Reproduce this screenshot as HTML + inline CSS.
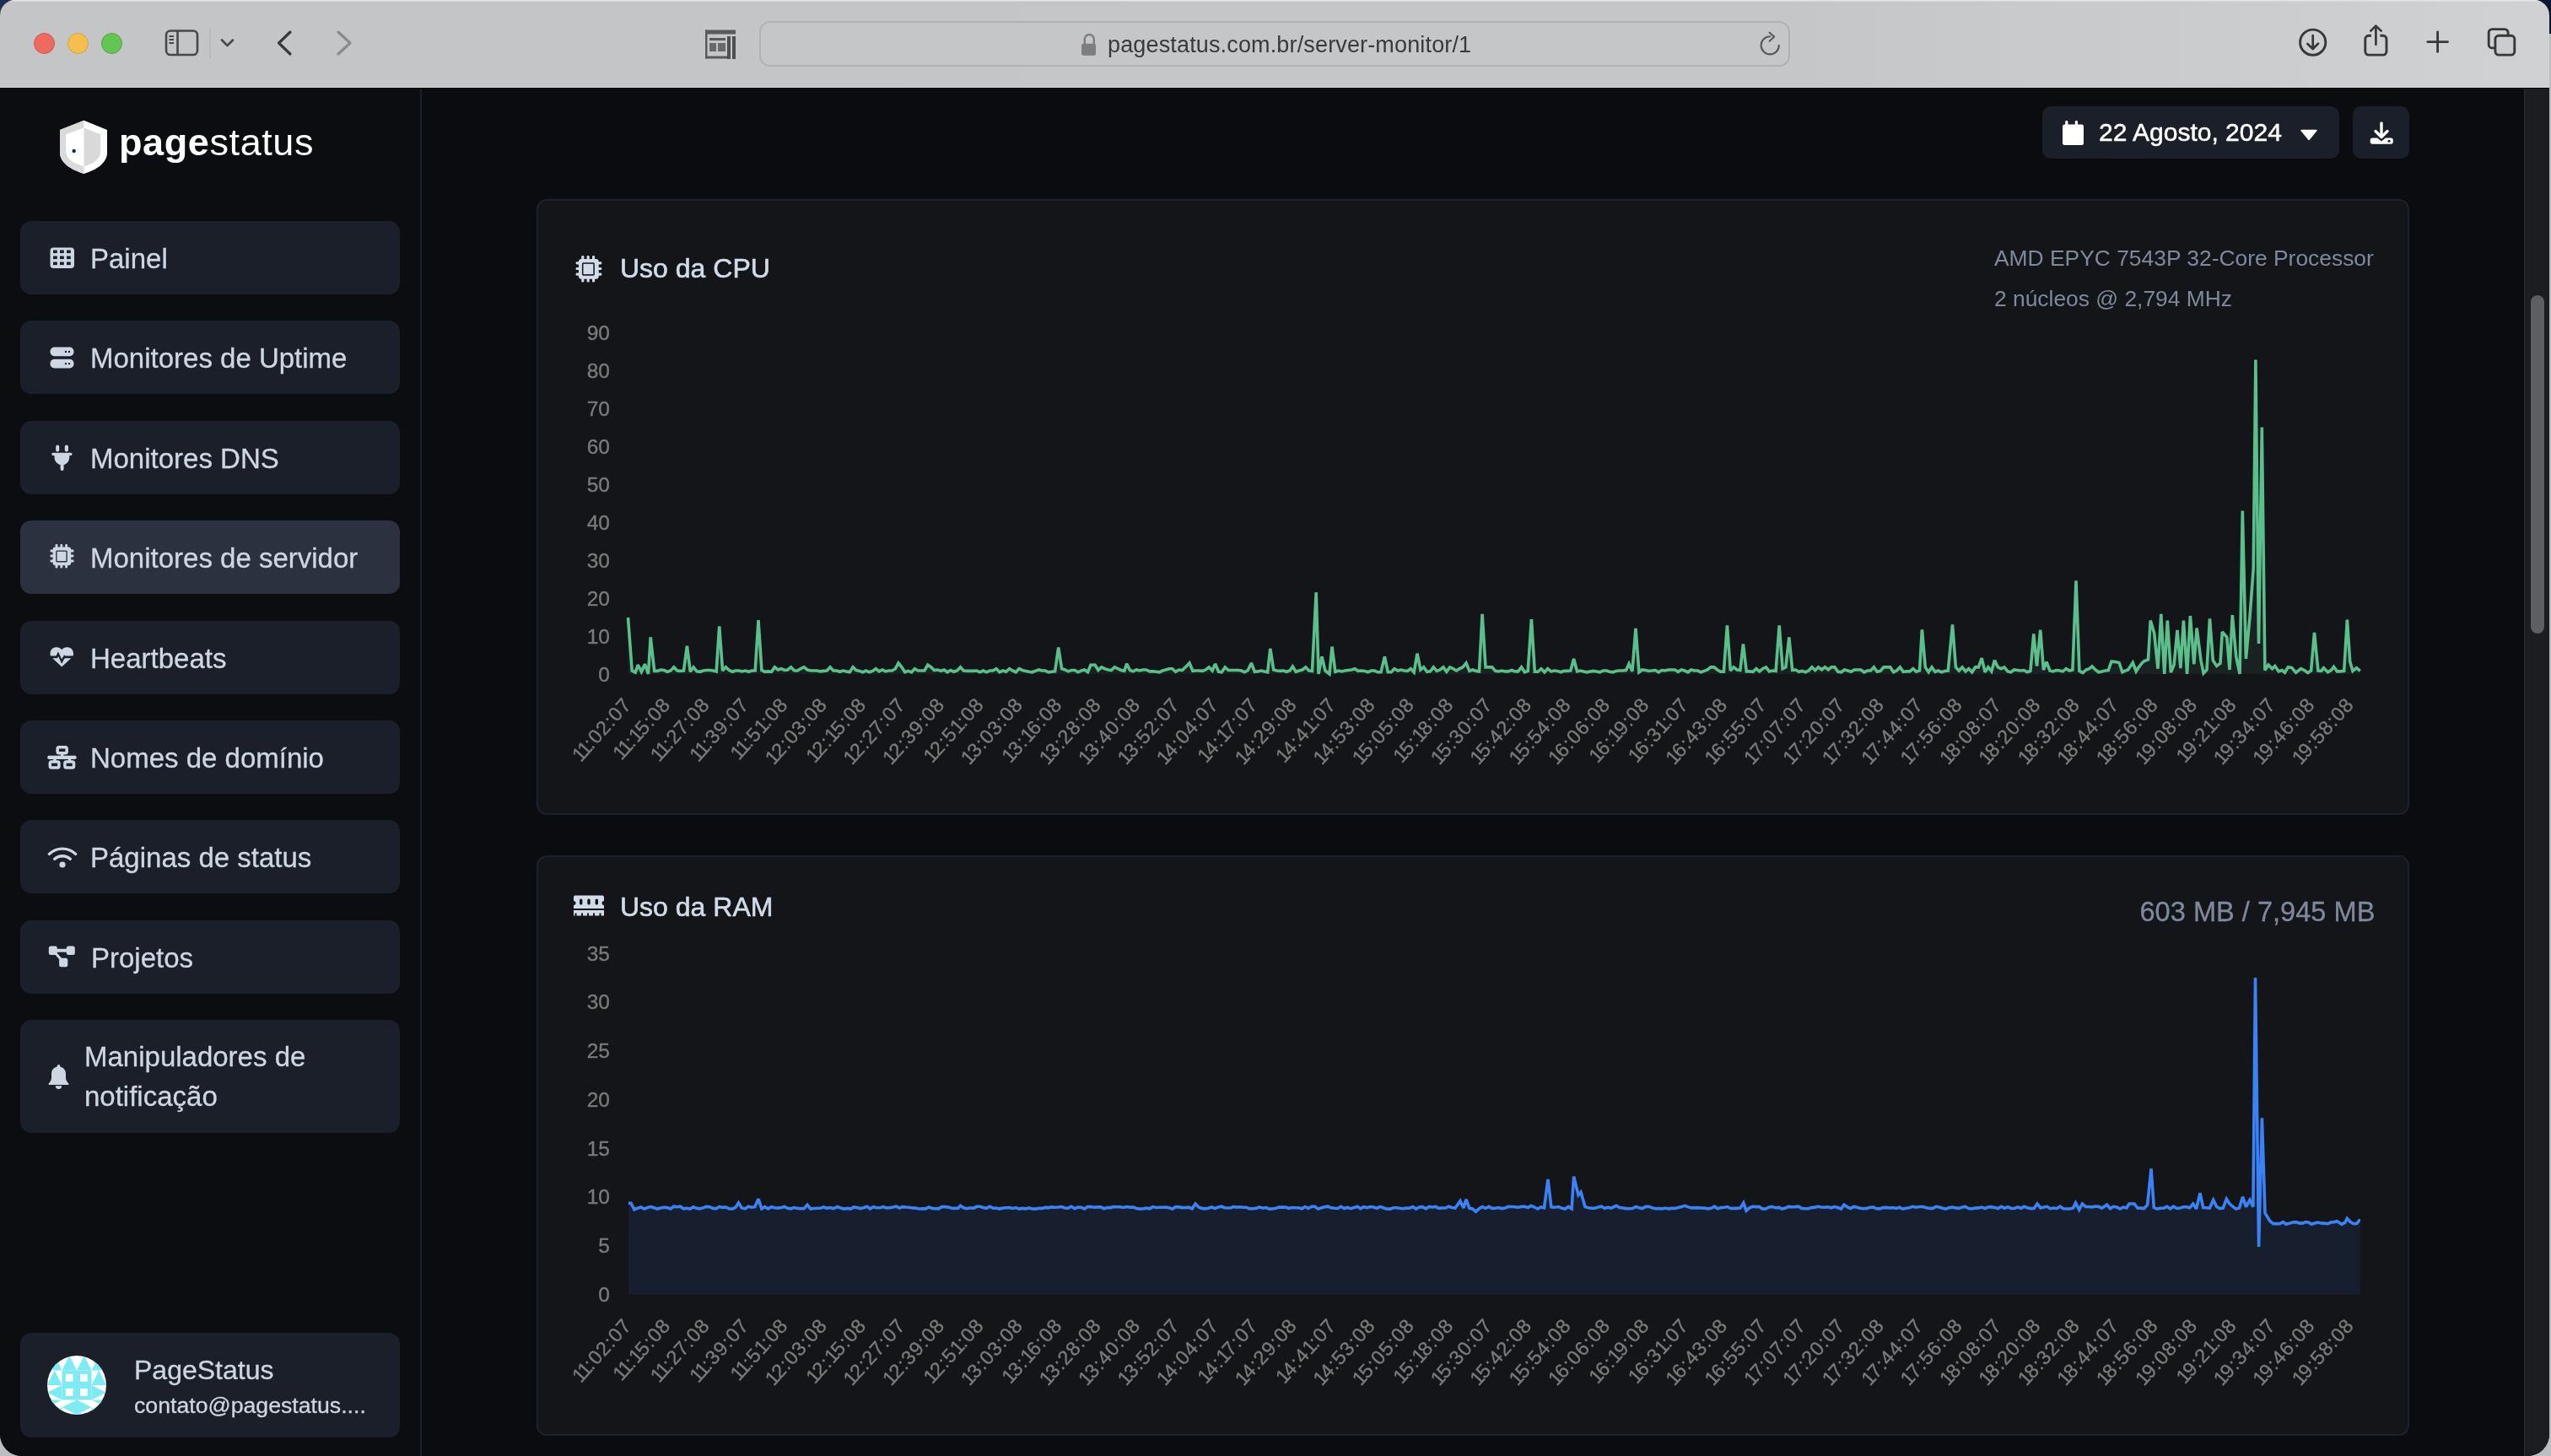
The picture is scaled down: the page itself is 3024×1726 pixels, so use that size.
<!DOCTYPE html>
<html><head><meta charset="utf-8">
<style>
*{box-sizing:border-box;margin:0;padding:0}
html,body{width:3024px;height:1726px;overflow:hidden;-webkit-font-smoothing:antialiased;background:#bdbec1;font-family:"Liberation Sans",sans-serif}
.abs{position:absolute}
#corner-tl{left:0;top:0;width:40px;height:40px;background:#1d3054}
#corner-tr{right:0;top:0;width:40px;height:40px;background:#0a1533}
#win{will-change:transform;position:absolute;left:0;top:0;width:3022px;height:1726px;border-radius:18px 18px 26px 26px;overflow:hidden;background:#0b0c10}
#chrome{left:0;top:0;width:3022px;height:103px;background:linear-gradient(to right,#c4c5c7 0%,#c5c6c8 70%,#d0d1d3 100%);box-shadow:inset 0 1.5px 0 #e6e6e7}
#chrome:after{content:'';position:absolute;left:0;top:103px;width:100%;height:1px;background:#d4d4d6;border-bottom:1px solid #000}
.tl{position:absolute;top:39px;width:25px;height:25px;border-radius:50%}
#urlbar{left:900px;top:24.5px;width:1222px;height:54px;border-radius:13px;border:2px solid #b0b1b3;background:#c5c6c8}
#urltext{left:1313px;top:38px;font-size:27px;color:#3a3a3c;white-space:nowrap;letter-spacing:0.15px}
#sidebar{left:0;top:105px;width:500px;height:1622px;background:#0b0d11;border-right:2px solid #1b212e}
.nav{position:absolute;left:24px;width:450px;height:86.5px;border-radius:13px;background:#1b1f2a}
.nav.active{background:#2c3140}
.nav .lbl{position:absolute;left:83px;top:2px;line-height:86px;font-size:33px;color:#cdd6e3;white-space:nowrap;-webkit-text-stroke:0.3px #cdd6e3}
.nav svg{position:absolute}
#main{left:500px;top:105px;width:2492px;height:1622px;background:#0b0c10}
.card{position:absolute;left:636px;width:2220px;border:2px solid #1b212d;border-radius:12px;background:#141518}
.ttl{position:absolute;left:735px;font-size:32px;color:#d2dce9;white-space:nowrap;-webkit-text-stroke:0.6px #d2dce9}
.gray{position:absolute;color:#7f899c;white-space:nowrap}
svg text.yl{font-family:"Liberation Sans";font-size:24.5px;fill:#7a7a7a;stroke:#7a7a7a;stroke-width:0.35px;text-anchor:end;dominant-baseline:central}
svg text.xl{font-family:"Liberation Sans";font-size:23.5px;letter-spacing:1px;fill:#7a7a7a;stroke:#7a7a7a;stroke-width:0.35px;text-anchor:end;dominant-baseline:central}
#scroll{left:2992px;top:105px;width:30px;height:1622px;background:#1c1d20;border-left:1.5px solid #2c2d31}
#thumb{left:3000px;top:350px;width:16px;height:401px;border-radius:8px;background:#5e5f62}
</style></head><body>
<div id="corner-tl" class="abs"></div><div id="corner-tr" class="abs"></div>
<div id="win">
<div id="chrome" class="abs">
  <div class="tl" style="left:40px;background:#ee6a5f;border:1px solid #d5544a"></div>
  <div class="tl" style="left:80px;background:#f5bf4f;border:1px solid #d9a33a"></div>
  <div class="tl" style="left:120px;background:#62c554;border:1px solid #4ea941"></div>
  <svg class="abs" style="left:0;top:0" width="1000" height="104">
    <!-- sidebar toggle -->
    <rect x="197" y="36.5" width="37" height="28.5" rx="5" fill="none" stroke="#48484a" stroke-width="2.6"/>
    <line x1="210.5" y1="37" x2="210.5" y2="65" stroke="#48484a" stroke-width="2.6"/>
    <line x1="200.5" y1="43" x2="206" y2="43" stroke="#48484a" stroke-width="1.8"/>
    <line x1="200.5" y1="47" x2="206" y2="47" stroke="#48484a" stroke-width="1.8"/>
    <line x1="200.5" y1="51" x2="206" y2="51" stroke="#48484a" stroke-width="1.8"/>
    <line x1="249" y1="34" x2="249" y2="70" stroke="#adaeb0" stroke-width="1"/>
    <polyline points="263,47.5 269.5,54 276,47.5" fill="none" stroke="#4a4a4c" stroke-width="2.6" stroke-linecap="round" stroke-linejoin="round"/>
    <polyline points="344,38 330.5,51 344,64" fill="none" stroke="#3a3a3c" stroke-width="3.2" stroke-linecap="round" stroke-linejoin="round"/>
    <polyline points="401,38 415,51 401,64" fill="none" stroke="#8a8b8d" stroke-width="3.2" stroke-linecap="round" stroke-linejoin="round"/>
    <!-- reader -->
    <rect x="836" y="35.5" width="36" height="5" fill="#5a5a5c"/>
    <rect x="836" y="35.5" width="2.5" height="34" fill="#5a5a5c"/>
    <rect x="836" y="66.5" width="28" height="3" fill="#5a5a5c"/>
    <rect x="841" y="45" width="19" height="3" fill="#5a5a5c"/>
    <rect x="841" y="51" width="8" height="10" fill="#6a6a6c"/>
    <rect x="851" y="51" width="9" height="10" fill="#6a6a6c"/>
    <rect x="862" y="43" width="4" height="27" fill="#4f4f51"/>
    <rect x="868" y="43" width="4" height="27" fill="#4f4f51"/>
  </svg>
  <div id="urlbar" class="abs"></div>
  <svg class="abs" style="left:1270px;top:30px" width="50" height="44">
    <path d="M15.8,22 v-5.5 a5.5,5.5 0 0 1 11,0 v5.5" fill="none" stroke="#7e7e80" stroke-width="2.4"/>
    <rect x="12" y="21.8" width="17" height="13.9" rx="2.5" fill="#7e7e80"/>
  </svg>
  <div id="urltext" class="abs">pagestatus.com.br/server-monitor/1</div>
  <svg class="abs" style="left:2080px;top:30.5px" width="40" height="40">
    <path d="M28.8,22.8 A10.6,10.6 0 1 1 18.2,12.2" fill="none" stroke="#58585a" stroke-width="2.1" stroke-linecap="round"/>
    <polyline points="17.6,7.6 23.2,12.5 17.6,17.8" fill="none" stroke="#58585a" stroke-width="2.1" stroke-linecap="round" stroke-linejoin="round"/>
  </svg>
  <svg class="abs" style="left:2700px;top:19px" width="322" height="64">
    <circle cx="41.7" cy="31.2" r="15.1" fill="none" stroke="#38383a" stroke-width="2.9"/>
    <line x1="41.7" y1="23" x2="41.7" y2="38.5" stroke="#38383a" stroke-width="2.7" stroke-linecap="round"/>
    <polyline points="35.4,33 41.7,39 48,32.6" fill="none" stroke="#38383a" stroke-width="2.7" stroke-linecap="round" stroke-linejoin="round"/>
    <path d="M111,23.3 h-3.2 a4,4 0 0 0 -4,4 v14.8 a4,4 0 0 0 4,4 h17.2 a4,4 0 0 0 4,-4 v-14.8 a4,4 0 0 0 -4,-4 h-3.6" fill="none" stroke="#38383a" stroke-width="2.9" stroke-linecap="butt"/>
    <line x1="116.4" y1="12.5" x2="116.4" y2="33.8" stroke="#38383a" stroke-width="2.7" stroke-linecap="round"/>
    <polyline points="110.3,17.6 116.4,11.6 122.6,17.6" fill="none" stroke="#38383a" stroke-width="2.7" stroke-linecap="round" stroke-linejoin="round"/>
    <line x1="189.6" y1="18.8" x2="189.6" y2="42.3" stroke="#38383a" stroke-width="2.8" stroke-linecap="round"/>
    <line x1="177.8" y1="30.6" x2="201.5" y2="30.6" stroke="#38383a" stroke-width="2.8" stroke-linecap="round"/>
    <rect x="250.2" y="15.6" width="22.9" height="22.3" rx="4" fill="none" stroke="#38383a" stroke-width="2.9"/>
    <rect x="257.9" y="23.3" width="22.9" height="22.8" rx="4" fill="#cbcccf" stroke="#38383a" stroke-width="2.9"/>
  </svg>
</div>

<div id="sidebar" class="abs"></div>
<div id="main" class="abs"></div>

<!-- logo -->
<svg class="abs" style="left:60px;top:135px" width="80" height="80">
  <path d="M39.5,7.8 L67,19 L67,46 C67,58 55,66 39.5,71 C24,66 11,58 11,46 L11,19 Z" fill="#ffffff"/>
  <path d="M39.5,7.8 L11,19 L11,46 C11,58 24,66 39.5,71 Z" fill="#dadada"/>
  <path d="M39.5,16.5 L18.1,24.2 L18.1,44 C18.1,53 27,59 39.5,62.2 C52,59 59.3,53 59.3,44 L59.3,24.2 Z" fill="#ffffff"/>
  <path d="M39.5,16.5 L59.3,24.2 L59.3,44 C59.3,53 52,59 39.5,62.2 Z" fill="#d9d9d9"/>
  <circle cx="27.7" cy="44" r="2.2" fill="#103236"/>
</svg>
<div class="abs" style="left:141px;top:143px;font-size:45px;color:#fff;white-space:nowrap;letter-spacing:0.6px"><b>page</b>status</div>

<!-- nav -->
<div class="nav" style="top:262px">
  <svg style="left:35px;top:31px" width="30" height="26" viewBox="0 0 30 26">
    <rect x="0.5" y="0.5" width="28.5" height="24.5" rx="4" fill="#cdd6e3"/>
    <g fill="#1b1f2a"><rect x="4" y="3.5" width="4.8" height="3.6"/><rect x="12" y="3.5" width="4.8" height="3.6"/><rect x="20" y="3.5" width="4.8" height="3.6"/>
    <rect x="4" y="10.5" width="4.8" height="3.6"/><rect x="12" y="10.5" width="4.8" height="3.6"/><rect x="20" y="10.5" width="4.8" height="3.6"/>
    <rect x="4" y="17.5" width="4.8" height="3.6"/><rect x="12" y="17.5" width="4.8" height="3.6"/><rect x="20" y="17.5" width="4.8" height="3.6"/></g>
  </svg>
  <div class="lbl">Painel</div></div>
<div class="nav" style="top:380px">
  <svg style="left:35px;top:31px" width="30" height="26" viewBox="0 0 30 26">
    <rect x="0.5" y="0.6" width="28" height="10.6" rx="5" fill="#cdd6e3"/>
    <rect x="0.5" y="14.8" width="28" height="10.6" rx="5" fill="#cdd6e3"/>
    <g fill="#1b1f2a"><circle cx="19" cy="5.9" r="1.2"/><circle cx="23" cy="5.9" r="1.2"/><circle cx="19" cy="20.1" r="1.2"/><circle cx="23" cy="20.1" r="1.2"/></g>
  </svg>
  <div class="lbl">Monitores de Uptime</div></div>
<div class="nav" style="top:499px">
  <svg style="left:36px;top:27px" width="26" height="32" viewBox="0 0 26 32">
    <rect x="6.2" y="1.5" width="4" height="8" rx="2" fill="#cdd6e3"/>
    <rect x="16.8" y="1.5" width="4.2" height="8" rx="2" fill="#cdd6e3"/>
    <path d="M2.8,10.7 H24 a1.6,1.6 0 0 1 0,3.2 H22.3 V16 C22.3,21 18.5,24.5 15.6,25 V30 a2,2 0 0 1 -4,0 V25 C8.5,24.5 4.5,21 4.5,16 V13.9 H2.8 a1.6,1.6 0 0 1 0,-3.2 Z" fill="#cdd6e3"/>
  </svg>
  <div class="lbl">Monitores DNS</div></div>
<div class="nav active" style="top:617px">
  <svg style="left:35px;top:27px" width="30" height="30" viewBox="0 0 30 30">
    <rect x="3.6" y="4.5" width="21.6" height="21.7" rx="3" fill="#cdd6e3"/>
    <g fill="#cdd6e3"><rect x="6.6" y="0.9" width="2.8" height="5" rx="1.2"/><rect x="12.4" y="0.9" width="2.8" height="5" rx="1.2"/><rect x="18.2" y="0.9" width="2.8" height="5" rx="1.2"/>
    <rect x="6.6" y="24.5" width="2.8" height="5" rx="1.2"/><rect x="12.4" y="24.5" width="2.8" height="5" rx="1.2"/><rect x="18.2" y="24.5" width="2.8" height="5" rx="1.2"/>
    <rect x="0.5" y="7.6" width="5" height="2.8" rx="1.2"/><rect x="0.5" y="13.6" width="5" height="2.8" rx="1.2"/><rect x="0.5" y="19.6" width="5" height="2.8" rx="1.2"/>
    <rect x="23.5" y="7.6" width="5" height="2.8" rx="1.2"/><rect x="23.5" y="13.6" width="5" height="2.8" rx="1.2"/><rect x="23.5" y="19.6" width="5" height="2.8" rx="1.2"/></g>
    <rect x="7.2" y="8.4" width="13.6" height="14" rx="1.5" fill="#2a2f3e"/>
    <rect x="8.6" y="9.8" width="10.8" height="11.2" fill="#cdd6e3"/>
  </svg>
  <div class="lbl">Monitores de servidor</div></div>
<div class="nav" style="top:736px">
  <svg style="left:35px;top:30px" width="30" height="26" viewBox="0 0 30 26">
    <path d="M14.2,4.2 C11,-0.5 0.5,0 0.5,9 C0.5,10 0.7,11 1,11.5 H7.5 L10,6.5 L14.2,15.5 L17,10.5 L18.5,11.5 H27.5 C27.8,11 28,10 28,9 C28,0 17.5,-0.5 14.2,4.2 Z" fill="#cdd6e3"/>
    <path d="M3.2,14.2 H9 L10.1,12 L14.2,20.8 L17.3,14.8 L18.2,14.2 H25.3 L14.2,24.6 Z" fill="#cdd6e3"/>
  </svg>
  <div class="lbl">Heartbeats</div></div>
<div class="nav" style="top:854px">
  <svg style="left:31px;top:28px" width="38" height="32" viewBox="0 0 38 32">
    <rect x="13.15" y="3.75" width="11" height="7.1" rx="1.8" fill="none" stroke="#cdd6e3" stroke-width="3.5"/>
    <rect x="17" y="12" width="3.3" height="3" fill="#cdd6e3"/>
    <rect x="1.1" y="13.8" width="34.6" height="4.1" rx="2" fill="#cdd6e3"/>
    <rect x="8.2" y="17" width="3.3" height="3" fill="#cdd6e3"/><rect x="25.8" y="17" width="3.3" height="3" fill="#cdd6e3"/>
    <rect x="4.3" y="20.9" width="10.6" height="7.2" rx="1.8" fill="none" stroke="#cdd6e3" stroke-width="3.5"/>
    <rect x="21.9" y="20.9" width="10.6" height="7.2" rx="1.8" fill="none" stroke="#cdd6e3" stroke-width="3.5"/>
  </svg>
  <div class="lbl">Nomes de domínio</div></div>
<div class="nav" style="top:972px">
  <svg style="left:31.5px;top:31.5px" width="38" height="28" viewBox="0 0 38 28">
    <path d="M2.4,8.4 C11,0 25,0 33.6,8.4" fill="none" stroke="#cdd6e3" stroke-width="3.4" stroke-linecap="round"/>
    <path d="M8.8,14.3 C14,9.5 22,9.5 27.2,14.3" fill="none" stroke="#cdd6e3" stroke-width="3.4" stroke-linecap="round"/>
    <circle cx="18" cy="21" r="3.6" fill="#cdd6e3"/>
  </svg>
  <div class="lbl">Páginas de status</div></div>
<div class="nav" style="top:1091px">
  <svg style="left:33px;top:29.3px" width="34" height="28" viewBox="0 0 34 28">
    <rect x="0.8" y="1.5" width="10" height="10.5" rx="2.5" fill="#cdd6e3"/>
    <rect x="21.8" y="1.5" width="10" height="10.5" rx="2.5" fill="#cdd6e3"/>
    <rect x="13.1" y="15.8" width="10.2" height="10.5" rx="2.5" fill="#cdd6e3"/>
    <rect x="10" y="4.8" width="12" height="3.9" fill="#cdd6e3"/>
    <path d="M6.5,9.5 L10.5,9.5 L17,17 L13,17 Z" fill="#cdd6e3"/>
  </svg>
  <div class="lbl" style="left:84px">Projetos</div></div>
<div class="nav" style="top:1209px;height:134px">
  <svg style="left:33px;top:52px" width="26" height="30" viewBox="0 0 26 30">
    <path d="M12.5,1 a1.8,1.8 0 0 1 1.8,1.8 V3.6 C18.5,4.5 21,8 21,12 V16.5 C21,19 22,21 24.3,23.6 C24.8,24.2 24.4,25 23.6,25 H1.4 C0.6,25 0.2,24.2 0.7,23.6 C3,21 4,19 4,16.5 V12 C4,8 6.5,4.5 10.7,3.6 V2.8 A1.8,1.8 0 0 1 12.5,1 Z" fill="#cdd6e3"/>
    <path d="M8.8,26.2 H16.2 A3.7,3.7 0 0 1 8.8,26.2 Z" fill="#cdd6e3"/>
  </svg>
  <div class="lbl" style="left:76px;top:19.5px;line-height:47.5px;white-space:normal;width:330px">Manipuladores de notificação</div></div>

<!-- user card -->
<div class="nav" style="top:1580px;height:124px">
  <svg style="left:32px;top:27px" width="70" height="70" viewBox="0 0 70 70">
    <defs><clipPath id="av"><circle cx="35" cy="35" r="35"/></clipPath></defs>
    <g clip-path="url(#av)">
      <rect width="70" height="70" fill="#ffffff"/>
      <g fill="#7eebf2">
        <path d="M8.75,0 L17.5,17.5 L0,17.5 Z"/><path d="M26.25,0 L35,17.5 L17.5,17.5 Z"/><path d="M43.75,0 L52.5,17.5 L35,17.5 Z"/><path d="M61.25,0 L70,17.5 L52.5,17.5 Z"/>
        <path d="M8.75,17.5 L17.5,35 L0,35 Z"/><path d="M61.25,17.5 L70,35 L52.5,35 Z"/>
        <rect x="17.5" y="17.5" width="35" height="35"/>
        <path d="M0,43.75 L17.5,35 L17.5,52.5 Z"/><path d="M70,43.75 L52.5,35 L52.5,52.5 Z"/>
        <path d="M0,52.5 L17.5,52.5 L8.75,61.25 Z" opacity="0.0"/>
        <path d="M17.5,61.25 L35,52.5 L52.5,61.25 L35,70 Z"/>
        <path d="M0,52.5 L17.5,52.5 L0,61.25 Z"/><path d="M70,52.5 L52.5,52.5 L70,61.25 Z"/>
        <path d="M0,70 L17.5,61.25 L17.5,70 Z"/><path d="M70,70 L52.5,61.25 L52.5,70 Z"/>
      </g>
      <g fill="#ffffff"><rect x="21.8" y="21.8" width="8.7" height="8.9"/><rect x="39" y="21.8" width="8.7" height="8.9"/><rect x="21.8" y="39" width="8.7" height="8.9"/><rect x="39" y="39" width="8.7" height="8.9"/></g>
    </g>
  </svg>
  <div class="abs" style="left:135px;top:26px;font-size:32px;color:#cdd6e3;white-space:nowrap;-webkit-text-stroke:0.3px #cdd6e3">PageStatus</div>
  <div class="abs" style="left:135px;top:71px;font-size:26.7px;color:#cdd6e3;white-space:nowrap;-webkit-text-stroke:0.3px #cdd6e3">contato@pagestatus....</div>
</div>

<!-- date / download buttons -->
<div class="abs" style="left:2421px;top:126px;width:352px;height:62px;border-radius:10px;background:#1b1f2a"></div>
<svg class="abs" style="left:2440px;top:140px" width="36" height="36" viewBox="0 0 36 36">
  <rect x="8.2" y="3" width="3.2" height="6" rx="1.4" fill="#fff"/><rect x="19.8" y="3" width="3.2" height="6" rx="1.4" fill="#fff"/>
  <path d="M5,10 a2.5,2.5 0 0 1 2.5,-2.5 H27.5 a2.5,2.5 0 0 1 2.5,2.5 V29.5 a2.5,2.5 0 0 1 -2.5,2.5 H7.5 a2.5,2.5 0 0 1 -2.5,-2.5 Z" fill="#fff"/>
</svg>
<div class="abs" style="left:2488px;top:140px;font-size:30px;color:#fff;white-space:nowrap;-webkit-text-stroke:0.5px #fff">22 Agosto, 2024</div>
<svg class="abs" style="left:2724px;top:150px" width="26" height="20"><path d="M4,4.5 H22 L13,15.5 Z" fill="#fff" stroke="#fff" stroke-width="1.5" stroke-linejoin="round"/></svg>
<div class="abs" style="left:2789px;top:126px;width:67px;height:62px;border-radius:10px;background:#1b1f2a"></div>
<svg class="abs" style="left:2806px;top:142px" width="34" height="34" viewBox="0 0 34 34">
  <line x1="17" y1="4" x2="17" y2="20" stroke="#fff" stroke-width="3.4" stroke-linecap="round"/>
  <polyline points="10,13.5 17,20.5 24,13.5" fill="none" stroke="#fff" stroke-width="3.4" stroke-linecap="round" stroke-linejoin="round"/>
  <path d="M6.5,21.5 H12 L17,25.5 L22,21.5 H28 a2.8,2.8 0 0 1 2.8,2.8 V26 a2.8,2.8 0 0 1 -2.8,2.8 H6.5 a2.8,2.8 0 0 1 -2.8,-2.8 V24.3 a2.8,2.8 0 0 1 2.8,-2.8 Z" fill="#fff"/>
  <circle cx="26" cy="25.2" r="1.5" fill="#1b1f2a"/>
</svg>

<!-- cards -->
<div class="card" style="top:236px;height:730px"></div>
<div class="card" style="top:1014px;height:688px"></div>

<!-- CPU header -->
<svg class="abs" style="left:681.5px;top:301.5px" width="33" height="33" viewBox="0 0 30 30">
  <rect x="3.6" y="4.5" width="21.6" height="21.7" rx="3" fill="#d2dce9"/>
  <g fill="#d2dce9"><rect x="6.6" y="0.9" width="2.8" height="5" rx="1.2"/><rect x="12.4" y="0.9" width="2.8" height="5" rx="1.2"/><rect x="18.2" y="0.9" width="2.8" height="5" rx="1.2"/>
  <rect x="6.6" y="24.5" width="2.8" height="5" rx="1.2"/><rect x="12.4" y="24.5" width="2.8" height="5" rx="1.2"/><rect x="18.2" y="24.5" width="2.8" height="5" rx="1.2"/>
  <rect x="0.5" y="7.6" width="5" height="2.8" rx="1.2"/><rect x="0.5" y="13.6" width="5" height="2.8" rx="1.2"/><rect x="0.5" y="19.6" width="5" height="2.8" rx="1.2"/>
  <rect x="23.5" y="7.6" width="5" height="2.8" rx="1.2"/><rect x="23.5" y="13.6" width="5" height="2.8" rx="1.2"/><rect x="23.5" y="19.6" width="5" height="2.8" rx="1.2"/></g>
  <rect x="7.2" y="8.4" width="13.6" height="14" rx="1.5" fill="#141518"/>
  <rect x="8.6" y="9.8" width="10.8" height="11.2" fill="#d2dce9"/>
</svg>
<div class="ttl" style="top:299.5px">Uso da CPU</div>
<div class="gray" style="left:2364px;top:290.5px;font-size:26.4px">AMD EPYC 7543P 32-Core Processor</div>
<div class="gray" style="left:2364px;top:338.5px;font-size:26.4px">2 núcleos @ 2,794 MHz</div>

<!-- RAM header -->
<svg class="abs" style="left:679px;top:1060px" width="38" height="28" viewBox="0 0 38 28">
  <path d="M3,1.5 H35 a2,2 0 0 1 2,2 V8 a2.5,2.5 0 0 0 0,5 V17 H1 V13 a2.5,2.5 0 0 0 0,-5 V3.5 a2,2 0 0 1 2,-2 Z" fill="#d2dce9"/>
  <g fill="#141518"><rect x="8" y="5.5" width="3.4" height="7" rx="1.5"/><rect x="17.3" y="5.5" width="3.4" height="7" rx="1.5"/><rect x="26.6" y="5.5" width="3.4" height="7" rx="1.5"/></g>
  <path d="M1,19 H37 V25.5 H33.5 V22.5 H31.5 V25.5 H26 V22.5 H24 V25.5 H19 V22.5 H17 V25.5 H12 V22.5 H10 V25.5 H4.5 V22.5 H2.5 V25.5 H1 Z" fill="#d2dce9"/>
</svg>
<div class="ttl" style="top:1056.8px">Uso da RAM</div>
<div class="gray" style="left:2536.5px;top:1062.3px;font-size:32.6px;-webkit-text-stroke:0.3px #7f899c">603 MB / 7,945 MB</div>

<svg class="abs" style="left:0;top:0" width="3024" height="1726">
<path d="M744.5,732.0 L749.2,795.2 L753.2,797.2 L756.3,788.2 L760.4,796.3 L764.5,787.3 L768.5,799.0 L771.2,755.4 L775.7,795.4 L779.6,795.4 L783.4,794.0 L787.3,794.5 L791.2,796.3 L795.0,795.0 L798.9,790.9 L802.8,795.0 L806.6,795.4 L810.5,795.0 L814.4,765.7 L818.3,796.3 L822.1,790.9 L826.0,795.9 L829.9,796.3 L833.7,795.0 L837.6,794.5 L841.5,794.5 L845.3,795.0 L849.2,795.9 L852.7,742.3 L856.6,795.0 L860.4,790.9 L864.3,794.5 L868.2,796.3 L872.0,795.0 L875.9,795.0 L879.8,795.9 L883.6,795.0 L887.5,796.3 L891.4,795.0 L895.2,795.0 L899.0,735.1 L902.9,794.5 L906.7,796.3 L910.6,795.9 L914.5,796.3 L918.3,790.9 L922.2,794.0 L926.1,792.7 L929.9,794.5 L933.8,794.0 L937.7,790.9 L941.5,795.0 L945.4,795.0 L949.3,792.7 L953.1,790.9 L957.0,794.0 L960.9,795.0 L964.7,795.0 L968.6,795.0 L972.5,795.9 L976.3,795.4 L980.2,795.0 L984.1,790.9 L987.9,795.0 L991.8,795.0 L995.7,796.3 L999.5,795.0 L1003.4,795.9 L1007.3,796.8 L1011.1,790.9 L1015.0,794.5 L1018.9,795.4 L1022.8,796.8 L1026.6,795.0 L1030.5,796.8 L1034.4,795.4 L1038.2,792.7 L1042.1,795.9 L1046.0,794.0 L1049.8,795.9 L1053.7,795.0 L1057.6,795.0 L1061.4,792.7 L1065.0,786.0 L1068.9,790.9 L1072.7,796.8 L1076.6,795.4 L1080.5,796.8 L1084.3,792.7 L1088.2,795.0 L1092.1,795.0 L1095.9,795.0 L1099.8,788.2 L1103.7,790.9 L1107.5,794.5 L1111.4,794.0 L1115.3,795.4 L1119.1,794.0 L1123.0,796.8 L1126.9,794.5 L1130.7,796.3 L1134.6,795.0 L1138.5,790.9 L1142.3,795.0 L1146.2,795.4 L1150.1,795.4 L1153.9,795.4 L1157.8,795.0 L1161.7,796.8 L1165.5,795.0 L1169.4,796.8 L1173.3,795.0 L1177.1,795.0 L1181.0,792.7 L1184.9,796.8 L1188.7,795.0 L1192.6,796.3 L1196.5,792.7 L1200.3,795.0 L1204.2,796.8 L1208.1,792.7 L1211.9,794.5 L1215.8,795.4 L1219.7,796.3 L1223.6,796.8 L1227.4,795.4 L1231.3,794.0 L1235.2,795.0 L1239.0,795.0 L1242.9,796.8 L1246.8,796.3 L1250.6,795.9 L1254.7,767.5 L1258.6,792.7 L1262.4,794.0 L1266.3,795.9 L1270.2,794.5 L1274.0,794.5 L1277.9,796.8 L1281.8,795.0 L1285.6,794.0 L1289.5,796.8 L1293.0,788.2 L1298.0,788.2 L1301.9,794.5 L1305.7,790.9 L1309.6,792.7 L1313.5,794.0 L1317.3,794.5 L1321.2,790.9 L1325.1,792.7 L1328.9,794.5 L1332.8,795.4 L1335.6,786.9 L1339.5,794.5 L1343.3,795.9 L1347.2,794.0 L1351.1,795.0 L1354.9,794.0 L1358.8,794.0 L1362.7,795.9 L1366.5,795.9 L1370.4,796.3 L1374.3,796.8 L1378.1,795.0 L1382.0,794.0 L1385.9,792.7 L1389.7,792.7 L1393.6,796.3 L1397.5,794.0 L1401.3,794.5 L1405.2,790.9 L1410.0,786.0 L1413.9,795.4 L1417.7,795.0 L1421.6,795.0 L1425.5,795.4 L1429.3,794.0 L1433.2,790.9 L1437.1,795.0 L1440.6,786.9 L1444.5,796.3 L1448.3,796.8 L1452.2,790.9 L1456.1,794.5 L1459.9,794.5 L1463.8,794.5 L1467.7,794.5 L1471.5,795.0 L1475.4,796.8 L1479.3,794.5 L1483.4,786.0 L1487.3,796.3 L1491.1,795.9 L1495.0,795.0 L1498.9,795.9 L1502.7,796.8 L1505.8,768.9 L1509.7,794.0 L1513.5,795.0 L1517.4,795.4 L1521.3,795.0 L1525.1,796.3 L1529.0,795.0 L1532.3,790.0 L1536.2,796.3 L1540.0,795.0 L1543.9,794.0 L1547.8,790.9 L1551.6,795.0 L1555.5,795.4 L1560.2,702.2 L1563.0,799.0 L1567.0,778.3 L1570.9,795.0 L1576.0,799.0 L1579.0,766.6 L1582.9,796.3 L1586.7,795.0 L1590.6,795.9 L1594.5,795.0 L1598.3,794.5 L1602.2,794.0 L1606.1,792.7 L1609.9,795.4 L1613.8,795.0 L1617.7,795.4 L1621.5,796.8 L1625.4,795.0 L1629.3,795.0 L1633.1,796.8 L1637.0,796.8 L1641.4,778.3 L1645.3,796.8 L1649.1,796.8 L1653.0,792.7 L1656.9,795.0 L1660.7,794.0 L1664.6,795.0 L1668.5,795.4 L1672.3,792.7 L1676.2,796.8 L1680.0,774.7 L1683.9,794.0 L1687.7,790.9 L1691.6,796.3 L1695.5,795.9 L1699.3,790.9 L1703.2,795.4 L1707.1,794.0 L1710.9,790.9 L1714.8,796.3 L1718.7,790.9 L1722.5,792.7 L1726.4,795.0 L1730.3,792.7 L1734.1,790.9 L1738.0,786.0 L1741.9,795.4 L1745.7,794.0 L1749.6,795.4 L1753.5,795.9 L1757.1,727.9 L1761.0,790.9 L1764.8,790.9 L1768.7,790.9 L1772.6,795.4 L1776.4,795.9 L1780.3,795.0 L1784.2,795.9 L1788.0,795.9 L1791.9,794.5 L1795.8,795.9 L1799.6,795.9 L1803.5,790.9 L1807.4,796.8 L1811.2,795.4 L1815.4,734.2 L1819.3,796.3 L1823.1,796.3 L1827.0,792.7 L1830.9,796.8 L1834.7,792.7 L1838.6,795.9 L1842.5,795.0 L1846.3,795.4 L1850.2,796.8 L1854.1,795.4 L1857.9,795.4 L1861.8,795.0 L1865.6,781.0 L1869.5,795.9 L1873.3,795.0 L1877.2,795.9 L1881.1,796.8 L1884.9,795.9 L1888.8,795.4 L1892.7,795.9 L1896.5,796.8 L1900.4,795.0 L1904.3,795.0 L1908.1,796.3 L1912.0,796.8 L1915.9,795.4 L1919.7,795.0 L1923.6,795.0 L1927.5,794.5 L1931.0,786.9 L1934.9,795.9 L1939.0,745.0 L1942.9,796.8 L1946.7,794.0 L1950.6,794.5 L1954.5,795.4 L1958.3,795.0 L1962.2,794.5 L1966.1,796.8 L1969.9,794.5 L1973.8,795.0 L1977.7,794.0 L1981.5,794.0 L1985.4,794.0 L1989.3,796.3 L1993.1,794.0 L1997.0,795.0 L2000.9,796.8 L2004.7,794.0 L2008.6,795.0 L2012.5,795.0 L2016.3,796.8 L2020.2,795.4 L2024.1,794.0 L2027.9,790.9 L2031.8,790.9 L2035.7,794.0 L2039.5,796.3 L2043.4,796.3 L2047.4,741.4 L2051.3,795.0 L2055.1,790.9 L2059.0,794.0 L2062.9,794.5 L2066.4,763.5 L2070.3,795.9 L2074.1,795.9 L2078.0,796.3 L2081.9,792.7 L2085.7,795.9 L2089.6,792.7 L2093.5,790.9 L2097.3,795.9 L2101.2,795.0 L2105.1,795.4 L2109.2,741.4 L2113.1,792.7 L2116.9,790.9 L2120.8,755.4 L2124.7,794.5 L2128.5,794.0 L2132.4,796.3 L2136.3,795.4 L2140.1,796.8 L2144.0,795.0 L2147.9,790.9 L2151.7,794.5 L2155.6,790.9 L2159.5,794.0 L2163.3,790.9 L2167.2,794.0 L2171.1,790.9 L2174.9,790.9 L2178.8,796.3 L2182.7,796.8 L2186.5,794.0 L2190.4,795.0 L2194.3,796.3 L2198.1,794.0 L2202.0,794.0 L2205.9,794.0 L2209.7,796.8 L2213.6,795.0 L2217.5,795.0 L2221.3,790.9 L2225.2,796.3 L2229.1,795.4 L2232.9,790.9 L2236.8,790.9 L2240.7,790.9 L2244.6,796.8 L2248.4,795.0 L2252.3,790.9 L2256.2,796.3 L2260.0,795.9 L2263.9,795.9 L2267.8,792.7 L2271.6,796.3 L2275.5,795.0 L2278.4,746.4 L2282.3,790.9 L2286.1,796.8 L2290.0,790.9 L2293.9,796.3 L2297.7,795.0 L2301.6,796.8 L2305.5,795.4 L2309.3,795.0 L2314.5,740.5 L2318.4,790.9 L2322.2,795.0 L2326.1,790.9 L2330.0,795.9 L2333.8,792.7 L2337.7,796.8 L2341.6,790.9 L2345.4,790.9 L2349.2,780.1 L2353.1,796.8 L2356.9,790.9 L2360.8,795.9 L2364.4,782.8 L2368.3,790.9 L2372.1,792.7 L2376.0,790.9 L2379.9,795.9 L2383.7,796.8 L2387.6,794.0 L2391.5,794.5 L2395.3,795.0 L2399.2,794.5 L2403.1,796.8 L2406.9,795.4 L2410.8,751.3 L2414.5,789.5 L2418.7,746.8 L2422.4,794.0 L2426.0,784.6 L2429.9,795.0 L2433.7,795.9 L2437.6,794.5 L2441.5,795.0 L2445.3,795.9 L2449.2,792.7 L2453.1,795.0 L2456.9,794.0 L2461.0,688.3 L2464.9,795.4 L2469.0,797.6 L2472.9,794.0 L2476.7,792.7 L2480.0,790.0 L2483.9,794.0 L2487.7,796.8 L2491.6,795.9 L2495.5,795.0 L2499.3,794.5 L2502.9,784.1 L2507.0,784.6 L2512.0,785.5 L2515.9,796.8 L2518.7,795.4 L2522.6,794.0 L2528.3,785.5 L2532.2,795.9 L2534.6,791.8 L2540.0,785.0 L2542.0,783.7 L2546.5,781.9 L2549.2,735.5 L2553.6,750.0 L2558.0,792.7 L2561.8,727.9 L2565.7,799.0 L2569.3,735.5 L2573.4,797.2 L2577.2,787.8 L2581.0,746.8 L2584.9,792.2 L2588.4,735.5 L2592.6,799.0 L2596.4,730.1 L2600.8,787.3 L2604.1,744.5 L2609.0,782.8 L2612.1,798.1 L2616.0,794.0 L2619.5,733.3 L2623.3,782.8 L2627.7,789.5 L2632.0,786.4 L2634.3,749.0 L2639.8,755.4 L2643.0,794.0 L2646.3,729.2 L2650.7,778.3 L2655.1,799.0 L2658.3,605.5 L2662.4,781.0 L2667.0,731.5 L2671.2,673.9 L2673.9,426.4 L2677.5,763.0 L2681.3,506.5 L2684.9,794.5 L2689.0,788.2 L2693.5,792.7 L2696.8,789.5 L2701.2,795.9 L2705.1,794.5 L2708.4,797.2 L2712.3,790.9 L2716.6,791.4 L2721.5,797.2 L2727.6,792.7 L2731.5,794.5 L2735.8,797.6 L2739.6,795.0 L2743.5,750.0 L2747.9,795.0 L2751.8,795.4 L2754.5,791.8 L2759.4,796.8 L2763.3,794.5 L2766.5,790.5 L2770.4,795.9 L2774.8,795.9 L2778.7,795.4 L2782.4,734.6 L2785.7,784.1 L2789.0,795.4 L2793.4,791.8 L2797.8,795.4 L2797.8,799.0 L744.5,799.0 Z" fill="rgba(91,191,140,0.08)" stroke="none"/>
<path d="M744.5,732.0 L749.2,795.2 L753.2,797.2 L756.3,788.2 L760.4,796.3 L764.5,787.3 L768.5,799.0 L771.2,755.4 L775.7,795.4 L779.6,795.4 L783.4,794.0 L787.3,794.5 L791.2,796.3 L795.0,795.0 L798.9,790.9 L802.8,795.0 L806.6,795.4 L810.5,795.0 L814.4,765.7 L818.3,796.3 L822.1,790.9 L826.0,795.9 L829.9,796.3 L833.7,795.0 L837.6,794.5 L841.5,794.5 L845.3,795.0 L849.2,795.9 L852.7,742.3 L856.6,795.0 L860.4,790.9 L864.3,794.5 L868.2,796.3 L872.0,795.0 L875.9,795.0 L879.8,795.9 L883.6,795.0 L887.5,796.3 L891.4,795.0 L895.2,795.0 L899.0,735.1 L902.9,794.5 L906.7,796.3 L910.6,795.9 L914.5,796.3 L918.3,790.9 L922.2,794.0 L926.1,792.7 L929.9,794.5 L933.8,794.0 L937.7,790.9 L941.5,795.0 L945.4,795.0 L949.3,792.7 L953.1,790.9 L957.0,794.0 L960.9,795.0 L964.7,795.0 L968.6,795.0 L972.5,795.9 L976.3,795.4 L980.2,795.0 L984.1,790.9 L987.9,795.0 L991.8,795.0 L995.7,796.3 L999.5,795.0 L1003.4,795.9 L1007.3,796.8 L1011.1,790.9 L1015.0,794.5 L1018.9,795.4 L1022.8,796.8 L1026.6,795.0 L1030.5,796.8 L1034.4,795.4 L1038.2,792.7 L1042.1,795.9 L1046.0,794.0 L1049.8,795.9 L1053.7,795.0 L1057.6,795.0 L1061.4,792.7 L1065.0,786.0 L1068.9,790.9 L1072.7,796.8 L1076.6,795.4 L1080.5,796.8 L1084.3,792.7 L1088.2,795.0 L1092.1,795.0 L1095.9,795.0 L1099.8,788.2 L1103.7,790.9 L1107.5,794.5 L1111.4,794.0 L1115.3,795.4 L1119.1,794.0 L1123.0,796.8 L1126.9,794.5 L1130.7,796.3 L1134.6,795.0 L1138.5,790.9 L1142.3,795.0 L1146.2,795.4 L1150.1,795.4 L1153.9,795.4 L1157.8,795.0 L1161.7,796.8 L1165.5,795.0 L1169.4,796.8 L1173.3,795.0 L1177.1,795.0 L1181.0,792.7 L1184.9,796.8 L1188.7,795.0 L1192.6,796.3 L1196.5,792.7 L1200.3,795.0 L1204.2,796.8 L1208.1,792.7 L1211.9,794.5 L1215.8,795.4 L1219.7,796.3 L1223.6,796.8 L1227.4,795.4 L1231.3,794.0 L1235.2,795.0 L1239.0,795.0 L1242.9,796.8 L1246.8,796.3 L1250.6,795.9 L1254.7,767.5 L1258.6,792.7 L1262.4,794.0 L1266.3,795.9 L1270.2,794.5 L1274.0,794.5 L1277.9,796.8 L1281.8,795.0 L1285.6,794.0 L1289.5,796.8 L1293.0,788.2 L1298.0,788.2 L1301.9,794.5 L1305.7,790.9 L1309.6,792.7 L1313.5,794.0 L1317.3,794.5 L1321.2,790.9 L1325.1,792.7 L1328.9,794.5 L1332.8,795.4 L1335.6,786.9 L1339.5,794.5 L1343.3,795.9 L1347.2,794.0 L1351.1,795.0 L1354.9,794.0 L1358.8,794.0 L1362.7,795.9 L1366.5,795.9 L1370.4,796.3 L1374.3,796.8 L1378.1,795.0 L1382.0,794.0 L1385.9,792.7 L1389.7,792.7 L1393.6,796.3 L1397.5,794.0 L1401.3,794.5 L1405.2,790.9 L1410.0,786.0 L1413.9,795.4 L1417.7,795.0 L1421.6,795.0 L1425.5,795.4 L1429.3,794.0 L1433.2,790.9 L1437.1,795.0 L1440.6,786.9 L1444.5,796.3 L1448.3,796.8 L1452.2,790.9 L1456.1,794.5 L1459.9,794.5 L1463.8,794.5 L1467.7,794.5 L1471.5,795.0 L1475.4,796.8 L1479.3,794.5 L1483.4,786.0 L1487.3,796.3 L1491.1,795.9 L1495.0,795.0 L1498.9,795.9 L1502.7,796.8 L1505.8,768.9 L1509.7,794.0 L1513.5,795.0 L1517.4,795.4 L1521.3,795.0 L1525.1,796.3 L1529.0,795.0 L1532.3,790.0 L1536.2,796.3 L1540.0,795.0 L1543.9,794.0 L1547.8,790.9 L1551.6,795.0 L1555.5,795.4 L1560.2,702.2 L1563.0,799.0 L1567.0,778.3 L1570.9,795.0 L1576.0,799.0 L1579.0,766.6 L1582.9,796.3 L1586.7,795.0 L1590.6,795.9 L1594.5,795.0 L1598.3,794.5 L1602.2,794.0 L1606.1,792.7 L1609.9,795.4 L1613.8,795.0 L1617.7,795.4 L1621.5,796.8 L1625.4,795.0 L1629.3,795.0 L1633.1,796.8 L1637.0,796.8 L1641.4,778.3 L1645.3,796.8 L1649.1,796.8 L1653.0,792.7 L1656.9,795.0 L1660.7,794.0 L1664.6,795.0 L1668.5,795.4 L1672.3,792.7 L1676.2,796.8 L1680.0,774.7 L1683.9,794.0 L1687.7,790.9 L1691.6,796.3 L1695.5,795.9 L1699.3,790.9 L1703.2,795.4 L1707.1,794.0 L1710.9,790.9 L1714.8,796.3 L1718.7,790.9 L1722.5,792.7 L1726.4,795.0 L1730.3,792.7 L1734.1,790.9 L1738.0,786.0 L1741.9,795.4 L1745.7,794.0 L1749.6,795.4 L1753.5,795.9 L1757.1,727.9 L1761.0,790.9 L1764.8,790.9 L1768.7,790.9 L1772.6,795.4 L1776.4,795.9 L1780.3,795.0 L1784.2,795.9 L1788.0,795.9 L1791.9,794.5 L1795.8,795.9 L1799.6,795.9 L1803.5,790.9 L1807.4,796.8 L1811.2,795.4 L1815.4,734.2 L1819.3,796.3 L1823.1,796.3 L1827.0,792.7 L1830.9,796.8 L1834.7,792.7 L1838.6,795.9 L1842.5,795.0 L1846.3,795.4 L1850.2,796.8 L1854.1,795.4 L1857.9,795.4 L1861.8,795.0 L1865.6,781.0 L1869.5,795.9 L1873.3,795.0 L1877.2,795.9 L1881.1,796.8 L1884.9,795.9 L1888.8,795.4 L1892.7,795.9 L1896.5,796.8 L1900.4,795.0 L1904.3,795.0 L1908.1,796.3 L1912.0,796.8 L1915.9,795.4 L1919.7,795.0 L1923.6,795.0 L1927.5,794.5 L1931.0,786.9 L1934.9,795.9 L1939.0,745.0 L1942.9,796.8 L1946.7,794.0 L1950.6,794.5 L1954.5,795.4 L1958.3,795.0 L1962.2,794.5 L1966.1,796.8 L1969.9,794.5 L1973.8,795.0 L1977.7,794.0 L1981.5,794.0 L1985.4,794.0 L1989.3,796.3 L1993.1,794.0 L1997.0,795.0 L2000.9,796.8 L2004.7,794.0 L2008.6,795.0 L2012.5,795.0 L2016.3,796.8 L2020.2,795.4 L2024.1,794.0 L2027.9,790.9 L2031.8,790.9 L2035.7,794.0 L2039.5,796.3 L2043.4,796.3 L2047.4,741.4 L2051.3,795.0 L2055.1,790.9 L2059.0,794.0 L2062.9,794.5 L2066.4,763.5 L2070.3,795.9 L2074.1,795.9 L2078.0,796.3 L2081.9,792.7 L2085.7,795.9 L2089.6,792.7 L2093.5,790.9 L2097.3,795.9 L2101.2,795.0 L2105.1,795.4 L2109.2,741.4 L2113.1,792.7 L2116.9,790.9 L2120.8,755.4 L2124.7,794.5 L2128.5,794.0 L2132.4,796.3 L2136.3,795.4 L2140.1,796.8 L2144.0,795.0 L2147.9,790.9 L2151.7,794.5 L2155.6,790.9 L2159.5,794.0 L2163.3,790.9 L2167.2,794.0 L2171.1,790.9 L2174.9,790.9 L2178.8,796.3 L2182.7,796.8 L2186.5,794.0 L2190.4,795.0 L2194.3,796.3 L2198.1,794.0 L2202.0,794.0 L2205.9,794.0 L2209.7,796.8 L2213.6,795.0 L2217.5,795.0 L2221.3,790.9 L2225.2,796.3 L2229.1,795.4 L2232.9,790.9 L2236.8,790.9 L2240.7,790.9 L2244.6,796.8 L2248.4,795.0 L2252.3,790.9 L2256.2,796.3 L2260.0,795.9 L2263.9,795.9 L2267.8,792.7 L2271.6,796.3 L2275.5,795.0 L2278.4,746.4 L2282.3,790.9 L2286.1,796.8 L2290.0,790.9 L2293.9,796.3 L2297.7,795.0 L2301.6,796.8 L2305.5,795.4 L2309.3,795.0 L2314.5,740.5 L2318.4,790.9 L2322.2,795.0 L2326.1,790.9 L2330.0,795.9 L2333.8,792.7 L2337.7,796.8 L2341.6,790.9 L2345.4,790.9 L2349.2,780.1 L2353.1,796.8 L2356.9,790.9 L2360.8,795.9 L2364.4,782.8 L2368.3,790.9 L2372.1,792.7 L2376.0,790.9 L2379.9,795.9 L2383.7,796.8 L2387.6,794.0 L2391.5,794.5 L2395.3,795.0 L2399.2,794.5 L2403.1,796.8 L2406.9,795.4 L2410.8,751.3 L2414.5,789.5 L2418.7,746.8 L2422.4,794.0 L2426.0,784.6 L2429.9,795.0 L2433.7,795.9 L2437.6,794.5 L2441.5,795.0 L2445.3,795.9 L2449.2,792.7 L2453.1,795.0 L2456.9,794.0 L2461.0,688.3 L2464.9,795.4 L2469.0,797.6 L2472.9,794.0 L2476.7,792.7 L2480.0,790.0 L2483.9,794.0 L2487.7,796.8 L2491.6,795.9 L2495.5,795.0 L2499.3,794.5 L2502.9,784.1 L2507.0,784.6 L2512.0,785.5 L2515.9,796.8 L2518.7,795.4 L2522.6,794.0 L2528.3,785.5 L2532.2,795.9 L2534.6,791.8 L2540.0,785.0 L2542.0,783.7 L2546.5,781.9 L2549.2,735.5 L2553.6,750.0 L2558.0,792.7 L2561.8,727.9 L2565.7,799.0 L2569.3,735.5 L2573.4,797.2 L2577.2,787.8 L2581.0,746.8 L2584.9,792.2 L2588.4,735.5 L2592.6,799.0 L2596.4,730.1 L2600.8,787.3 L2604.1,744.5 L2609.0,782.8 L2612.1,798.1 L2616.0,794.0 L2619.5,733.3 L2623.3,782.8 L2627.7,789.5 L2632.0,786.4 L2634.3,749.0 L2639.8,755.4 L2643.0,794.0 L2646.3,729.2 L2650.7,778.3 L2655.1,799.0 L2658.3,605.5 L2662.4,781.0 L2667.0,731.5 L2671.2,673.9 L2673.9,426.4 L2677.5,763.0 L2681.3,506.5 L2684.9,794.5 L2689.0,788.2 L2693.5,792.7 L2696.8,789.5 L2701.2,795.9 L2705.1,794.5 L2708.4,797.2 L2712.3,790.9 L2716.6,791.4 L2721.5,797.2 L2727.6,792.7 L2731.5,794.5 L2735.8,797.6 L2739.6,795.0 L2743.5,750.0 L2747.9,795.0 L2751.8,795.4 L2754.5,791.8 L2759.4,796.8 L2763.3,794.5 L2766.5,790.5 L2770.4,795.9 L2774.8,795.9 L2778.7,795.4 L2782.4,734.6 L2785.7,784.1 L2789.0,795.4 L2793.4,791.8 L2797.8,795.4" fill="none" stroke="#5bbf8c" stroke-width="3.6" stroke-linejoin="miter" stroke-miterlimit="2.5"/>
<text x="723" y="799.0" class="yl">0</text>
<text x="723" y="754.0" class="yl">10</text>
<text x="723" y="709.0" class="yl">20</text>
<text x="723" y="664.0" class="yl">30</text>
<text x="723" y="619.0" class="yl">40</text>
<text x="723" y="574.0" class="yl">50</text>
<text x="723" y="529.0" class="yl">60</text>
<text x="723" y="484.0" class="yl">70</text>
<text x="723" y="439.0" class="yl">80</text>
<text x="723" y="394.0" class="yl">90</text>
<text transform="translate(743.9,830.6) rotate(-48)" class="xl">1<tspan dx="-3">1</tspan><tspan dx="-3">:</tspan>02:07</text>
<text transform="translate(790.3,830.6) rotate(-48)" class="xl">1<tspan dx="-3">1</tspan><tspan dx="-3">:</tspan>1<tspan dx="-3">5</tspan>:08</text>
<text transform="translate(836.7,830.6) rotate(-48)" class="xl">1<tspan dx="-3">1</tspan><tspan dx="-3">:</tspan>27:08</text>
<text transform="translate(883.1,830.6) rotate(-48)" class="xl">1<tspan dx="-3">1</tspan><tspan dx="-3">:</tspan>39:07</text>
<text transform="translate(929.5,830.6) rotate(-48)" class="xl">1<tspan dx="-3">1</tspan><tspan dx="-3">:</tspan>51<tspan dx="-3">:</tspan>08</text>
<text transform="translate(975.9,830.6) rotate(-48)" class="xl">1<tspan dx="-3">2</tspan>:03:08</text>
<text transform="translate(1022.3,830.6) rotate(-48)" class="xl">1<tspan dx="-3">2</tspan>:1<tspan dx="-3">5</tspan>:08</text>
<text transform="translate(1068.7,830.6) rotate(-48)" class="xl">1<tspan dx="-3">2</tspan>:27:07</text>
<text transform="translate(1115.2,830.6) rotate(-48)" class="xl">1<tspan dx="-3">2</tspan>:39:08</text>
<text transform="translate(1161.6,830.6) rotate(-48)" class="xl">1<tspan dx="-3">2</tspan>:51<tspan dx="-3">:</tspan>08</text>
<text transform="translate(1208.0,830.6) rotate(-48)" class="xl">1<tspan dx="-3">3</tspan>:03:08</text>
<text transform="translate(1254.4,830.6) rotate(-48)" class="xl">1<tspan dx="-3">3</tspan>:1<tspan dx="-3">6</tspan>:08</text>
<text transform="translate(1300.8,830.6) rotate(-48)" class="xl">1<tspan dx="-3">3</tspan>:28:08</text>
<text transform="translate(1347.2,830.6) rotate(-48)" class="xl">1<tspan dx="-3">3</tspan>:40:08</text>
<text transform="translate(1393.6,830.6) rotate(-48)" class="xl">1<tspan dx="-3">3</tspan>:52:07</text>
<text transform="translate(1440.0,830.6) rotate(-48)" class="xl">1<tspan dx="-3">4</tspan>:04:07</text>
<text transform="translate(1486.4,830.6) rotate(-48)" class="xl">1<tspan dx="-3">4</tspan>:1<tspan dx="-3">7</tspan>:07</text>
<text transform="translate(1532.8,830.6) rotate(-48)" class="xl">1<tspan dx="-3">4</tspan>:29:08</text>
<text transform="translate(1579.2,830.6) rotate(-48)" class="xl">1<tspan dx="-3">4</tspan>:41<tspan dx="-3">:</tspan>07</text>
<text transform="translate(1625.6,830.6) rotate(-48)" class="xl">1<tspan dx="-3">4</tspan>:53:08</text>
<text transform="translate(1672.0,830.6) rotate(-48)" class="xl">1<tspan dx="-3">5</tspan>:05:08</text>
<text transform="translate(1718.4,830.6) rotate(-48)" class="xl">1<tspan dx="-3">5</tspan>:1<tspan dx="-3">8</tspan>:08</text>
<text transform="translate(1764.8,830.6) rotate(-48)" class="xl">1<tspan dx="-3">5</tspan>:30:07</text>
<text transform="translate(1811.3,830.6) rotate(-48)" class="xl">1<tspan dx="-3">5</tspan>:42:08</text>
<text transform="translate(1857.7,830.6) rotate(-48)" class="xl">1<tspan dx="-3">5</tspan>:54:08</text>
<text transform="translate(1904.1,830.6) rotate(-48)" class="xl">1<tspan dx="-3">6</tspan>:06:08</text>
<text transform="translate(1950.5,830.6) rotate(-48)" class="xl">1<tspan dx="-3">6</tspan>:1<tspan dx="-3">9</tspan>:08</text>
<text transform="translate(1996.9,830.6) rotate(-48)" class="xl">1<tspan dx="-3">6</tspan>:31<tspan dx="-3">:</tspan>07</text>
<text transform="translate(2043.3,830.6) rotate(-48)" class="xl">1<tspan dx="-3">6</tspan>:43:08</text>
<text transform="translate(2089.7,830.6) rotate(-48)" class="xl">1<tspan dx="-3">6</tspan>:55:07</text>
<text transform="translate(2136.1,830.6) rotate(-48)" class="xl">1<tspan dx="-3">7</tspan>:07:07</text>
<text transform="translate(2182.5,830.6) rotate(-48)" class="xl">1<tspan dx="-3">7</tspan>:20:07</text>
<text transform="translate(2228.9,830.6) rotate(-48)" class="xl">1<tspan dx="-3">7</tspan>:32:08</text>
<text transform="translate(2275.3,830.6) rotate(-48)" class="xl">1<tspan dx="-3">7</tspan>:44:07</text>
<text transform="translate(2321.7,830.6) rotate(-48)" class="xl">1<tspan dx="-3">7</tspan>:56:08</text>
<text transform="translate(2368.1,830.6) rotate(-48)" class="xl">1<tspan dx="-3">8</tspan>:08:07</text>
<text transform="translate(2414.5,830.6) rotate(-48)" class="xl">1<tspan dx="-3">8</tspan>:20:08</text>
<text transform="translate(2461.0,830.6) rotate(-48)" class="xl">1<tspan dx="-3">8</tspan>:32:08</text>
<text transform="translate(2507.4,830.6) rotate(-48)" class="xl">1<tspan dx="-3">8</tspan>:44:07</text>
<text transform="translate(2553.8,830.6) rotate(-48)" class="xl">1<tspan dx="-3">8</tspan>:56:08</text>
<text transform="translate(2600.2,830.6) rotate(-48)" class="xl">1<tspan dx="-3">9</tspan>:08:08</text>
<text transform="translate(2646.6,830.6) rotate(-48)" class="xl">1<tspan dx="-3">9</tspan>:21<tspan dx="-3">:</tspan>08</text>
<text transform="translate(2693.0,830.6) rotate(-48)" class="xl">1<tspan dx="-3">9</tspan>:34:07</text>
<text transform="translate(2739.4,830.6) rotate(-48)" class="xl">1<tspan dx="-3">9</tspan>:46:08</text>
<text transform="translate(2785.8,830.6) rotate(-48)" class="xl">1<tspan dx="-3">9</tspan>:58:08</text>
<path d="M745.0,1426.4 L748.0,1426.4 L752.0,1434.0 L755.9,1432.2 L759.7,1431.0 L763.6,1433.1 L767.5,1431.5 L771.6,1430.5 L775.5,1431.8 L779.3,1433.1 L783.2,1432.1 L787.1,1431.3 L790.9,1431.6 L794.8,1433.0 L798.7,1430.2 L802.5,1430.8 L806.4,1430.2 L810.3,1432.8 L814.1,1432.3 L818.0,1433.0 L821.9,1430.8 L825.7,1432.3 L829.6,1432.8 L833.5,1431.9 L837.3,1430.4 L841.2,1430.7 L845.1,1432.4 L848.9,1432.7 L852.8,1430.4 L856.7,1431.4 L860.5,1431.0 L864.4,1432.9 L868.3,1433.0 L872.1,1431.1 L875.5,1425.9 L879.4,1431.9 L883.2,1432.9 L887.1,1430.3 L891.0,1431.2 L894.8,1430.7 L899.0,1421.2 L902.9,1432.9 L906.7,1430.6 L910.6,1432.9 L914.5,1430.6 L918.3,1431.8 L922.2,1432.1 L926.1,1431.5 L929.9,1430.4 L933.8,1432.3 L937.7,1432.8 L941.5,1431.6 L945.4,1432.4 L949.3,1432.8 L953.1,1432.7 L957.0,1428.2 L960.9,1433.0 L964.7,1432.5 L968.6,1432.2 L972.5,1432.2 L976.3,1430.9 L980.2,1432.3 L984.1,1431.6 L987.9,1432.6 L992.8,1430.5 L996.7,1432.1 L1000.5,1433.1 L1004.4,1432.4 L1008.3,1433.1 L1012.1,1430.9 L1016.0,1431.5 L1019.9,1432.6 L1023.7,1431.7 L1027.6,1430.3 L1031.5,1432.8 L1035.3,1430.7 L1039.2,1431.8 L1043.1,1431.7 L1046.9,1430.6 L1050.8,1432.0 L1054.7,1431.6 L1058.5,1431.1 L1062.4,1430.2 L1066.3,1432.1 L1070.1,1430.6 L1074.0,1431.0 L1077.9,1431.2 L1081.7,1431.9 L1085.6,1432.1 L1089.5,1433.0 L1093.3,1432.8 L1097.2,1432.9 L1101.1,1430.9 L1104.9,1432.4 L1108.8,1432.7 L1112.7,1432.9 L1116.6,1430.6 L1120.4,1430.5 L1124.3,1431.1 L1128.2,1432.3 L1132.0,1432.4 L1135.9,1432.3 L1138.5,1429.3 L1142.4,1431.8 L1146.2,1432.7 L1150.1,1431.8 L1154.0,1432.4 L1157.8,1430.3 L1161.7,1430.2 L1165.6,1431.5 L1169.4,1432.4 L1173.3,1430.2 L1177.2,1432.2 L1181.0,1432.1 L1184.9,1433.1 L1188.8,1432.0 L1192.6,1431.7 L1196.5,1431.6 L1200.4,1432.5 L1204.2,1431.6 L1208.1,1433.1 L1212.0,1432.4 L1215.8,1432.9 L1219.7,1431.9 L1223.6,1433.0 L1227.4,1433.1 L1231.3,1432.2 L1235.2,1432.4 L1239.0,1431.4 L1242.9,1431.6 L1246.8,1430.9 L1250.6,1431.2 L1254.5,1431.0 L1258.4,1430.5 L1262.3,1432.0 L1266.1,1432.2 L1270.0,1430.2 L1273.9,1432.7 L1277.7,1431.0 L1281.6,1431.2 L1285.5,1433.0 L1289.3,1430.6 L1293.2,1430.5 L1297.1,1431.3 L1300.9,1430.9 L1304.8,1430.7 L1308.7,1432.7 L1312.5,1431.6 L1316.4,1431.6 L1320.3,1430.6 L1324.1,1430.7 L1328.0,1430.7 L1331.9,1431.4 L1335.7,1430.5 L1339.6,1431.1 L1343.5,1431.1 L1347.3,1432.5 L1351.2,1433.1 L1355.1,1432.7 L1358.9,1432.1 L1362.8,1432.8 L1366.7,1430.6 L1370.5,1431.5 L1374.4,1431.3 L1378.3,1431.3 L1382.1,1431.1 L1386.0,1431.7 L1389.9,1433.1 L1393.7,1430.7 L1397.6,1430.9 L1401.5,1431.6 L1405.3,1431.5 L1409.2,1431.2 L1413.1,1432.9 L1417.0,1427.0 L1420.9,1430.9 L1424.7,1432.4 L1428.6,1432.9 L1432.5,1432.3 L1436.3,1431.0 L1440.2,1432.5 L1444.1,1430.9 L1447.9,1430.2 L1451.8,1431.7 L1455.7,1432.0 L1459.5,1431.7 L1462.0,1430.5 L1465.9,1431.1 L1469.7,1430.8 L1473.6,1431.3 L1477.5,1431.2 L1481.3,1432.9 L1485.2,1432.7 L1489.1,1432.4 L1492.9,1430.9 L1496.8,1432.2 L1500.7,1431.4 L1504.5,1433.1 L1508.4,1433.0 L1512.3,1432.3 L1516.1,1431.1 L1520.0,1431.1 L1523.9,1431.1 L1527.7,1432.3 L1531.6,1431.6 L1535.5,1431.7 L1539.3,1431.7 L1543.2,1432.8 L1547.1,1430.5 L1550.9,1432.5 L1554.8,1430.2 L1558.7,1430.3 L1562.5,1433.1 L1566.4,1431.8 L1570.3,1430.7 L1574.1,1430.2 L1578.0,1431.8 L1581.9,1432.3 L1585.8,1432.5 L1589.6,1430.3 L1593.5,1432.5 L1597.4,1431.4 L1601.2,1432.7 L1605.1,1431.6 L1609.0,1430.3 L1612.8,1432.7 L1616.7,1430.7 L1620.6,1431.6 L1624.4,1430.5 L1628.3,1431.0 L1632.2,1432.4 L1636.0,1430.4 L1639.9,1431.7 L1643.8,1433.1 L1647.6,1433.1 L1651.5,1431.7 L1655.4,1431.8 L1659.2,1432.2 L1663.1,1432.7 L1667.0,1432.1 L1670.8,1432.2 L1674.7,1430.6 L1678.6,1433.1 L1682.4,1430.9 L1686.3,1430.6 L1690.2,1432.8 L1694.0,1430.4 L1697.9,1431.0 L1701.8,1430.4 L1705.6,1432.3 L1709.5,1432.0 L1713.4,1432.0 L1717.2,1430.1 L1721.1,1431.4 L1725.0,1432.1 L1731.0,1423.6 L1734.9,1431.9 L1738.0,1421.8 L1741.9,1432.3 L1745.7,1433.0 L1749.4,1436.3 L1753.3,1432.8 L1757.1,1430.6 L1761.0,1432.3 L1764.9,1430.3 L1768.7,1432.4 L1772.6,1432.3 L1776.5,1431.6 L1780.3,1432.6 L1784.2,1432.0 L1788.1,1430.3 L1791.9,1430.5 L1795.8,1430.7 L1799.7,1431.2 L1803.5,1430.4 L1807.4,1430.3 L1811.3,1431.5 L1815.0,1429.3 L1818.9,1431.0 L1822.7,1433.0 L1826.6,1430.9 L1830.5,1431.8 L1835.0,1398.1 L1838.9,1430.9 L1842.7,1431.2 L1847.6,1430.5 L1851.5,1432.3 L1855.3,1433.0 L1859.2,1430.4 L1863.1,1432.8 L1865.6,1394.7 L1871.0,1416.6 L1874.0,1413.2 L1879.0,1430.5 L1882.9,1431.7 L1886.7,1432.1 L1890.6,1432.3 L1894.5,1430.9 L1898.3,1430.2 L1902.2,1432.4 L1906.1,1431.2 L1909.9,1432.2 L1916.0,1429.3 L1919.9,1431.5 L1923.7,1432.0 L1927.6,1432.6 L1931.5,1432.7 L1935.3,1432.5 L1939.2,1430.4 L1943.1,1431.7 L1946.9,1432.5 L1950.8,1430.4 L1954.7,1430.2 L1958.5,1431.8 L1962.4,1432.7 L1966.3,1432.6 L1970.1,1432.9 L1974.0,1432.1 L1977.9,1432.9 L1981.7,1432.4 L1985.6,1432.4 L1989.5,1431.4 L1993.3,1430.5 L1997.5,1429.3 L2001.4,1430.9 L2005.2,1431.9 L2009.1,1431.9 L2013.0,1431.6 L2016.8,1432.0 L2020.7,1432.1 L2024.6,1433.0 L2028.4,1432.3 L2032.3,1430.2 L2036.2,1432.8 L2040.0,1431.6 L2043.9,1431.3 L2047.8,1430.6 L2051.6,1432.5 L2055.5,1432.3 L2059.4,1432.4 L2063.2,1431.9 L2066.8,1425.9 L2070.0,1435.1 L2073.9,1431.8 L2077.7,1430.3 L2081.6,1430.6 L2085.5,1430.5 L2089.3,1433.1 L2093.2,1433.0 L2097.1,1431.0 L2100.9,1430.5 L2104.8,1431.7 L2108.7,1431.4 L2112.5,1433.1 L2116.4,1432.0 L2120.3,1430.4 L2124.1,1430.7 L2128.0,1430.6 L2131.9,1430.2 L2135.7,1432.4 L2139.6,1432.8 L2143.5,1432.7 L2147.3,1431.6 L2151.2,1431.1 L2155.1,1430.3 L2158.9,1431.0 L2162.8,1431.2 L2166.7,1430.8 L2170.5,1431.8 L2174.8,1430.5 L2178.7,1431.5 L2182.5,1433.0 L2186.0,1428.2 L2189.9,1430.8 L2193.7,1432.4 L2197.6,1430.4 L2201.5,1431.2 L2205.3,1432.2 L2209.2,1432.8 L2213.1,1432.4 L2216.9,1431.2 L2220.8,1431.0 L2224.7,1432.8 L2228.5,1432.9 L2232.4,1431.6 L2236.3,1431.4 L2240.1,1432.0 L2244.0,1431.6 L2247.9,1432.5 L2251.7,1431.3 L2255.6,1433.1 L2259.5,1432.2 L2263.3,1431.8 L2267.2,1430.3 L2271.1,1431.2 L2275.7,1430.5 L2279.6,1430.5 L2283.4,1431.7 L2287.3,1432.4 L2291.2,1432.4 L2295.0,1430.3 L2298.9,1431.0 L2302.8,1432.2 L2306.6,1433.1 L2310.5,1431.6 L2314.4,1431.1 L2318.2,1431.9 L2322.1,1432.4 L2326.0,1431.1 L2329.8,1430.4 L2333.7,1432.5 L2337.6,1433.0 L2341.4,1432.1 L2345.3,1431.9 L2349.2,1431.1 L2353.0,1432.5 L2356.9,1430.8 L2360.8,1430.9 L2364.6,1431.6 L2368.5,1432.5 L2372.4,1430.2 L2376.2,1432.2 L2380.1,1430.7 L2384.0,1432.5 L2387.8,1432.5 L2391.7,1430.9 L2395.6,1432.3 L2399.5,1430.3 L2403.3,1431.7 L2407.2,1432.6 L2411.1,1432.5 L2415.0,1427.0 L2418.9,1431.9 L2422.7,1431.1 L2426.6,1430.3 L2430.5,1432.7 L2434.3,1432.0 L2438.2,1432.5 L2442.1,1430.2 L2445.9,1432.7 L2449.8,1433.0 L2453.7,1433.0 L2457.5,1432.0 L2460.5,1425.9 L2464.7,1434.0 L2468.4,1427.0 L2472.3,1430.4 L2476.1,1430.5 L2480.0,1430.9 L2483.9,1430.1 L2487.7,1430.3 L2491.6,1432.2 L2497.6,1428.2 L2501.5,1432.6 L2505.3,1430.3 L2509.2,1430.9 L2513.1,1433.0 L2516.9,1431.1 L2520.8,1432.0 L2524.0,1427.0 L2530.0,1427.0 L2533.9,1432.0 L2537.7,1432.1 L2541.6,1432.6 L2545.6,1428.2 L2550.0,1385.4 L2553.3,1431.6 L2557.2,1433.1 L2561.0,1432.3 L2564.9,1432.1 L2568.8,1430.3 L2572.6,1432.8 L2576.5,1430.2 L2580.4,1432.5 L2584.2,1432.1 L2588.1,1430.7 L2592.0,1430.7 L2595.8,1431.8 L2599.7,1427.0 L2603.6,1433.0 L2608.0,1414.3 L2611.7,1431.6 L2615.6,1431.7 L2619.4,1432.0 L2623.7,1422.4 L2627.6,1430.4 L2631.4,1432.6 L2635.3,1432.1 L2639.3,1421.2 L2643.0,1427.0 L2646.9,1430.4 L2650.7,1433.1 L2654.6,1431.9 L2658.6,1418.9 L2662.5,1430.7 L2667.0,1422.4 L2670.9,1430.8 L2673.5,1158.9 L2677.6,1477.9 L2681.4,1325.3 L2685.0,1438.0 L2691.0,1447.8 L2694.9,1450.6 L2698.7,1450.6 L2702.6,1450.6 L2706.5,1448.6 L2710.0,1451.3 L2713.9,1450.1 L2717.7,1449.0 L2721.6,1448.6 L2725.5,1449.9 L2729.3,1450.1 L2733.2,1448.5 L2737.1,1449.3 L2740.0,1451.3 L2743.9,1450.1 L2747.7,1449.1 L2751.6,1450.0 L2755.5,1450.1 L2759.3,1450.7 L2763.2,1449.0 L2767.1,1448.6 L2770.3,1447.8 L2776.0,1451.3 L2779.9,1449.2 L2782.3,1444.4 L2786.2,1448.5 L2790.0,1450.7 L2793.9,1450.2 L2796.8,1446.7 L2798.0,1446.7 L2798.0,1534.5 L745.0,1534.5 Z" fill="rgba(59,130,246,0.10)" stroke="none"/>
<path d="M745.0,1426.4 L748.0,1426.4 L752.0,1434.0 L755.9,1432.2 L759.7,1431.0 L763.6,1433.1 L767.5,1431.5 L771.6,1430.5 L775.5,1431.8 L779.3,1433.1 L783.2,1432.1 L787.1,1431.3 L790.9,1431.6 L794.8,1433.0 L798.7,1430.2 L802.5,1430.8 L806.4,1430.2 L810.3,1432.8 L814.1,1432.3 L818.0,1433.0 L821.9,1430.8 L825.7,1432.3 L829.6,1432.8 L833.5,1431.9 L837.3,1430.4 L841.2,1430.7 L845.1,1432.4 L848.9,1432.7 L852.8,1430.4 L856.7,1431.4 L860.5,1431.0 L864.4,1432.9 L868.3,1433.0 L872.1,1431.1 L875.5,1425.9 L879.4,1431.9 L883.2,1432.9 L887.1,1430.3 L891.0,1431.2 L894.8,1430.7 L899.0,1421.2 L902.9,1432.9 L906.7,1430.6 L910.6,1432.9 L914.5,1430.6 L918.3,1431.8 L922.2,1432.1 L926.1,1431.5 L929.9,1430.4 L933.8,1432.3 L937.7,1432.8 L941.5,1431.6 L945.4,1432.4 L949.3,1432.8 L953.1,1432.7 L957.0,1428.2 L960.9,1433.0 L964.7,1432.5 L968.6,1432.2 L972.5,1432.2 L976.3,1430.9 L980.2,1432.3 L984.1,1431.6 L987.9,1432.6 L992.8,1430.5 L996.7,1432.1 L1000.5,1433.1 L1004.4,1432.4 L1008.3,1433.1 L1012.1,1430.9 L1016.0,1431.5 L1019.9,1432.6 L1023.7,1431.7 L1027.6,1430.3 L1031.5,1432.8 L1035.3,1430.7 L1039.2,1431.8 L1043.1,1431.7 L1046.9,1430.6 L1050.8,1432.0 L1054.7,1431.6 L1058.5,1431.1 L1062.4,1430.2 L1066.3,1432.1 L1070.1,1430.6 L1074.0,1431.0 L1077.9,1431.2 L1081.7,1431.9 L1085.6,1432.1 L1089.5,1433.0 L1093.3,1432.8 L1097.2,1432.9 L1101.1,1430.9 L1104.9,1432.4 L1108.8,1432.7 L1112.7,1432.9 L1116.6,1430.6 L1120.4,1430.5 L1124.3,1431.1 L1128.2,1432.3 L1132.0,1432.4 L1135.9,1432.3 L1138.5,1429.3 L1142.4,1431.8 L1146.2,1432.7 L1150.1,1431.8 L1154.0,1432.4 L1157.8,1430.3 L1161.7,1430.2 L1165.6,1431.5 L1169.4,1432.4 L1173.3,1430.2 L1177.2,1432.2 L1181.0,1432.1 L1184.9,1433.1 L1188.8,1432.0 L1192.6,1431.7 L1196.5,1431.6 L1200.4,1432.5 L1204.2,1431.6 L1208.1,1433.1 L1212.0,1432.4 L1215.8,1432.9 L1219.7,1431.9 L1223.6,1433.0 L1227.4,1433.1 L1231.3,1432.2 L1235.2,1432.4 L1239.0,1431.4 L1242.9,1431.6 L1246.8,1430.9 L1250.6,1431.2 L1254.5,1431.0 L1258.4,1430.5 L1262.3,1432.0 L1266.1,1432.2 L1270.0,1430.2 L1273.9,1432.7 L1277.7,1431.0 L1281.6,1431.2 L1285.5,1433.0 L1289.3,1430.6 L1293.2,1430.5 L1297.1,1431.3 L1300.9,1430.9 L1304.8,1430.7 L1308.7,1432.7 L1312.5,1431.6 L1316.4,1431.6 L1320.3,1430.6 L1324.1,1430.7 L1328.0,1430.7 L1331.9,1431.4 L1335.7,1430.5 L1339.6,1431.1 L1343.5,1431.1 L1347.3,1432.5 L1351.2,1433.1 L1355.1,1432.7 L1358.9,1432.1 L1362.8,1432.8 L1366.7,1430.6 L1370.5,1431.5 L1374.4,1431.3 L1378.3,1431.3 L1382.1,1431.1 L1386.0,1431.7 L1389.9,1433.1 L1393.7,1430.7 L1397.6,1430.9 L1401.5,1431.6 L1405.3,1431.5 L1409.2,1431.2 L1413.1,1432.9 L1417.0,1427.0 L1420.9,1430.9 L1424.7,1432.4 L1428.6,1432.9 L1432.5,1432.3 L1436.3,1431.0 L1440.2,1432.5 L1444.1,1430.9 L1447.9,1430.2 L1451.8,1431.7 L1455.7,1432.0 L1459.5,1431.7 L1462.0,1430.5 L1465.9,1431.1 L1469.7,1430.8 L1473.6,1431.3 L1477.5,1431.2 L1481.3,1432.9 L1485.2,1432.7 L1489.1,1432.4 L1492.9,1430.9 L1496.8,1432.2 L1500.7,1431.4 L1504.5,1433.1 L1508.4,1433.0 L1512.3,1432.3 L1516.1,1431.1 L1520.0,1431.1 L1523.9,1431.1 L1527.7,1432.3 L1531.6,1431.6 L1535.5,1431.7 L1539.3,1431.7 L1543.2,1432.8 L1547.1,1430.5 L1550.9,1432.5 L1554.8,1430.2 L1558.7,1430.3 L1562.5,1433.1 L1566.4,1431.8 L1570.3,1430.7 L1574.1,1430.2 L1578.0,1431.8 L1581.9,1432.3 L1585.8,1432.5 L1589.6,1430.3 L1593.5,1432.5 L1597.4,1431.4 L1601.2,1432.7 L1605.1,1431.6 L1609.0,1430.3 L1612.8,1432.7 L1616.7,1430.7 L1620.6,1431.6 L1624.4,1430.5 L1628.3,1431.0 L1632.2,1432.4 L1636.0,1430.4 L1639.9,1431.7 L1643.8,1433.1 L1647.6,1433.1 L1651.5,1431.7 L1655.4,1431.8 L1659.2,1432.2 L1663.1,1432.7 L1667.0,1432.1 L1670.8,1432.2 L1674.7,1430.6 L1678.6,1433.1 L1682.4,1430.9 L1686.3,1430.6 L1690.2,1432.8 L1694.0,1430.4 L1697.9,1431.0 L1701.8,1430.4 L1705.6,1432.3 L1709.5,1432.0 L1713.4,1432.0 L1717.2,1430.1 L1721.1,1431.4 L1725.0,1432.1 L1731.0,1423.6 L1734.9,1431.9 L1738.0,1421.8 L1741.9,1432.3 L1745.7,1433.0 L1749.4,1436.3 L1753.3,1432.8 L1757.1,1430.6 L1761.0,1432.3 L1764.9,1430.3 L1768.7,1432.4 L1772.6,1432.3 L1776.5,1431.6 L1780.3,1432.6 L1784.2,1432.0 L1788.1,1430.3 L1791.9,1430.5 L1795.8,1430.7 L1799.7,1431.2 L1803.5,1430.4 L1807.4,1430.3 L1811.3,1431.5 L1815.0,1429.3 L1818.9,1431.0 L1822.7,1433.0 L1826.6,1430.9 L1830.5,1431.8 L1835.0,1398.1 L1838.9,1430.9 L1842.7,1431.2 L1847.6,1430.5 L1851.5,1432.3 L1855.3,1433.0 L1859.2,1430.4 L1863.1,1432.8 L1865.6,1394.7 L1871.0,1416.6 L1874.0,1413.2 L1879.0,1430.5 L1882.9,1431.7 L1886.7,1432.1 L1890.6,1432.3 L1894.5,1430.9 L1898.3,1430.2 L1902.2,1432.4 L1906.1,1431.2 L1909.9,1432.2 L1916.0,1429.3 L1919.9,1431.5 L1923.7,1432.0 L1927.6,1432.6 L1931.5,1432.7 L1935.3,1432.5 L1939.2,1430.4 L1943.1,1431.7 L1946.9,1432.5 L1950.8,1430.4 L1954.7,1430.2 L1958.5,1431.8 L1962.4,1432.7 L1966.3,1432.6 L1970.1,1432.9 L1974.0,1432.1 L1977.9,1432.9 L1981.7,1432.4 L1985.6,1432.4 L1989.5,1431.4 L1993.3,1430.5 L1997.5,1429.3 L2001.4,1430.9 L2005.2,1431.9 L2009.1,1431.9 L2013.0,1431.6 L2016.8,1432.0 L2020.7,1432.1 L2024.6,1433.0 L2028.4,1432.3 L2032.3,1430.2 L2036.2,1432.8 L2040.0,1431.6 L2043.9,1431.3 L2047.8,1430.6 L2051.6,1432.5 L2055.5,1432.3 L2059.4,1432.4 L2063.2,1431.9 L2066.8,1425.9 L2070.0,1435.1 L2073.9,1431.8 L2077.7,1430.3 L2081.6,1430.6 L2085.5,1430.5 L2089.3,1433.1 L2093.2,1433.0 L2097.1,1431.0 L2100.9,1430.5 L2104.8,1431.7 L2108.7,1431.4 L2112.5,1433.1 L2116.4,1432.0 L2120.3,1430.4 L2124.1,1430.7 L2128.0,1430.6 L2131.9,1430.2 L2135.7,1432.4 L2139.6,1432.8 L2143.5,1432.7 L2147.3,1431.6 L2151.2,1431.1 L2155.1,1430.3 L2158.9,1431.0 L2162.8,1431.2 L2166.7,1430.8 L2170.5,1431.8 L2174.8,1430.5 L2178.7,1431.5 L2182.5,1433.0 L2186.0,1428.2 L2189.9,1430.8 L2193.7,1432.4 L2197.6,1430.4 L2201.5,1431.2 L2205.3,1432.2 L2209.2,1432.8 L2213.1,1432.4 L2216.9,1431.2 L2220.8,1431.0 L2224.7,1432.8 L2228.5,1432.9 L2232.4,1431.6 L2236.3,1431.4 L2240.1,1432.0 L2244.0,1431.6 L2247.9,1432.5 L2251.7,1431.3 L2255.6,1433.1 L2259.5,1432.2 L2263.3,1431.8 L2267.2,1430.3 L2271.1,1431.2 L2275.7,1430.5 L2279.6,1430.5 L2283.4,1431.7 L2287.3,1432.4 L2291.2,1432.4 L2295.0,1430.3 L2298.9,1431.0 L2302.8,1432.2 L2306.6,1433.1 L2310.5,1431.6 L2314.4,1431.1 L2318.2,1431.9 L2322.1,1432.4 L2326.0,1431.1 L2329.8,1430.4 L2333.7,1432.5 L2337.6,1433.0 L2341.4,1432.1 L2345.3,1431.9 L2349.2,1431.1 L2353.0,1432.5 L2356.9,1430.8 L2360.8,1430.9 L2364.6,1431.6 L2368.5,1432.5 L2372.4,1430.2 L2376.2,1432.2 L2380.1,1430.7 L2384.0,1432.5 L2387.8,1432.5 L2391.7,1430.9 L2395.6,1432.3 L2399.5,1430.3 L2403.3,1431.7 L2407.2,1432.6 L2411.1,1432.5 L2415.0,1427.0 L2418.9,1431.9 L2422.7,1431.1 L2426.6,1430.3 L2430.5,1432.7 L2434.3,1432.0 L2438.2,1432.5 L2442.1,1430.2 L2445.9,1432.7 L2449.8,1433.0 L2453.7,1433.0 L2457.5,1432.0 L2460.5,1425.9 L2464.7,1434.0 L2468.4,1427.0 L2472.3,1430.4 L2476.1,1430.5 L2480.0,1430.9 L2483.9,1430.1 L2487.7,1430.3 L2491.6,1432.2 L2497.6,1428.2 L2501.5,1432.6 L2505.3,1430.3 L2509.2,1430.9 L2513.1,1433.0 L2516.9,1431.1 L2520.8,1432.0 L2524.0,1427.0 L2530.0,1427.0 L2533.9,1432.0 L2537.7,1432.1 L2541.6,1432.6 L2545.6,1428.2 L2550.0,1385.4 L2553.3,1431.6 L2557.2,1433.1 L2561.0,1432.3 L2564.9,1432.1 L2568.8,1430.3 L2572.6,1432.8 L2576.5,1430.2 L2580.4,1432.5 L2584.2,1432.1 L2588.1,1430.7 L2592.0,1430.7 L2595.8,1431.8 L2599.7,1427.0 L2603.6,1433.0 L2608.0,1414.3 L2611.7,1431.6 L2615.6,1431.7 L2619.4,1432.0 L2623.7,1422.4 L2627.6,1430.4 L2631.4,1432.6 L2635.3,1432.1 L2639.3,1421.2 L2643.0,1427.0 L2646.9,1430.4 L2650.7,1433.1 L2654.6,1431.9 L2658.6,1418.9 L2662.5,1430.7 L2667.0,1422.4 L2670.9,1430.8 L2673.5,1158.9 L2677.6,1477.9 L2681.4,1325.3 L2685.0,1438.0 L2691.0,1447.8 L2694.9,1450.6 L2698.7,1450.6 L2702.6,1450.6 L2706.5,1448.6 L2710.0,1451.3 L2713.9,1450.1 L2717.7,1449.0 L2721.6,1448.6 L2725.5,1449.9 L2729.3,1450.1 L2733.2,1448.5 L2737.1,1449.3 L2740.0,1451.3 L2743.9,1450.1 L2747.7,1449.1 L2751.6,1450.0 L2755.5,1450.1 L2759.3,1450.7 L2763.2,1449.0 L2767.1,1448.6 L2770.3,1447.8 L2776.0,1451.3 L2779.9,1449.2 L2782.3,1444.4 L2786.2,1448.5 L2790.0,1450.7 L2793.9,1450.2 L2796.8,1446.7 L2798.0,1446.7" fill="none" stroke="#3b82f6" stroke-width="3.6" stroke-linejoin="miter" stroke-miterlimit="2.5"/>
<text x="723" y="1534.5" class="yl">0</text>
<text x="723" y="1476.7" class="yl">5</text>
<text x="723" y="1418.9" class="yl">10</text>
<text x="723" y="1361.1" class="yl">15</text>
<text x="723" y="1303.4" class="yl">20</text>
<text x="723" y="1245.6" class="yl">25</text>
<text x="723" y="1187.8" class="yl">30</text>
<text x="723" y="1130.0" class="yl">35</text>
<text transform="translate(743.9,1566.6) rotate(-48)" class="xl">1<tspan dx="-3">1</tspan><tspan dx="-3">:</tspan>02:07</text>
<text transform="translate(790.3,1566.6) rotate(-48)" class="xl">1<tspan dx="-3">1</tspan><tspan dx="-3">:</tspan>1<tspan dx="-3">5</tspan>:08</text>
<text transform="translate(836.7,1566.6) rotate(-48)" class="xl">1<tspan dx="-3">1</tspan><tspan dx="-3">:</tspan>27:08</text>
<text transform="translate(883.1,1566.6) rotate(-48)" class="xl">1<tspan dx="-3">1</tspan><tspan dx="-3">:</tspan>39:07</text>
<text transform="translate(929.5,1566.6) rotate(-48)" class="xl">1<tspan dx="-3">1</tspan><tspan dx="-3">:</tspan>51<tspan dx="-3">:</tspan>08</text>
<text transform="translate(975.9,1566.6) rotate(-48)" class="xl">1<tspan dx="-3">2</tspan>:03:08</text>
<text transform="translate(1022.3,1566.6) rotate(-48)" class="xl">1<tspan dx="-3">2</tspan>:1<tspan dx="-3">5</tspan>:08</text>
<text transform="translate(1068.7,1566.6) rotate(-48)" class="xl">1<tspan dx="-3">2</tspan>:27:07</text>
<text transform="translate(1115.2,1566.6) rotate(-48)" class="xl">1<tspan dx="-3">2</tspan>:39:08</text>
<text transform="translate(1161.6,1566.6) rotate(-48)" class="xl">1<tspan dx="-3">2</tspan>:51<tspan dx="-3">:</tspan>08</text>
<text transform="translate(1208.0,1566.6) rotate(-48)" class="xl">1<tspan dx="-3">3</tspan>:03:08</text>
<text transform="translate(1254.4,1566.6) rotate(-48)" class="xl">1<tspan dx="-3">3</tspan>:1<tspan dx="-3">6</tspan>:08</text>
<text transform="translate(1300.8,1566.6) rotate(-48)" class="xl">1<tspan dx="-3">3</tspan>:28:08</text>
<text transform="translate(1347.2,1566.6) rotate(-48)" class="xl">1<tspan dx="-3">3</tspan>:40:08</text>
<text transform="translate(1393.6,1566.6) rotate(-48)" class="xl">1<tspan dx="-3">3</tspan>:52:07</text>
<text transform="translate(1440.0,1566.6) rotate(-48)" class="xl">1<tspan dx="-3">4</tspan>:04:07</text>
<text transform="translate(1486.4,1566.6) rotate(-48)" class="xl">1<tspan dx="-3">4</tspan>:1<tspan dx="-3">7</tspan>:07</text>
<text transform="translate(1532.8,1566.6) rotate(-48)" class="xl">1<tspan dx="-3">4</tspan>:29:08</text>
<text transform="translate(1579.2,1566.6) rotate(-48)" class="xl">1<tspan dx="-3">4</tspan>:41<tspan dx="-3">:</tspan>07</text>
<text transform="translate(1625.6,1566.6) rotate(-48)" class="xl">1<tspan dx="-3">4</tspan>:53:08</text>
<text transform="translate(1672.0,1566.6) rotate(-48)" class="xl">1<tspan dx="-3">5</tspan>:05:08</text>
<text transform="translate(1718.4,1566.6) rotate(-48)" class="xl">1<tspan dx="-3">5</tspan>:1<tspan dx="-3">8</tspan>:08</text>
<text transform="translate(1764.8,1566.6) rotate(-48)" class="xl">1<tspan dx="-3">5</tspan>:30:07</text>
<text transform="translate(1811.3,1566.6) rotate(-48)" class="xl">1<tspan dx="-3">5</tspan>:42:08</text>
<text transform="translate(1857.7,1566.6) rotate(-48)" class="xl">1<tspan dx="-3">5</tspan>:54:08</text>
<text transform="translate(1904.1,1566.6) rotate(-48)" class="xl">1<tspan dx="-3">6</tspan>:06:08</text>
<text transform="translate(1950.5,1566.6) rotate(-48)" class="xl">1<tspan dx="-3">6</tspan>:1<tspan dx="-3">9</tspan>:08</text>
<text transform="translate(1996.9,1566.6) rotate(-48)" class="xl">1<tspan dx="-3">6</tspan>:31<tspan dx="-3">:</tspan>07</text>
<text transform="translate(2043.3,1566.6) rotate(-48)" class="xl">1<tspan dx="-3">6</tspan>:43:08</text>
<text transform="translate(2089.7,1566.6) rotate(-48)" class="xl">1<tspan dx="-3">6</tspan>:55:07</text>
<text transform="translate(2136.1,1566.6) rotate(-48)" class="xl">1<tspan dx="-3">7</tspan>:07:07</text>
<text transform="translate(2182.5,1566.6) rotate(-48)" class="xl">1<tspan dx="-3">7</tspan>:20:07</text>
<text transform="translate(2228.9,1566.6) rotate(-48)" class="xl">1<tspan dx="-3">7</tspan>:32:08</text>
<text transform="translate(2275.3,1566.6) rotate(-48)" class="xl">1<tspan dx="-3">7</tspan>:44:07</text>
<text transform="translate(2321.7,1566.6) rotate(-48)" class="xl">1<tspan dx="-3">7</tspan>:56:08</text>
<text transform="translate(2368.1,1566.6) rotate(-48)" class="xl">1<tspan dx="-3">8</tspan>:08:07</text>
<text transform="translate(2414.5,1566.6) rotate(-48)" class="xl">1<tspan dx="-3">8</tspan>:20:08</text>
<text transform="translate(2461.0,1566.6) rotate(-48)" class="xl">1<tspan dx="-3">8</tspan>:32:08</text>
<text transform="translate(2507.4,1566.6) rotate(-48)" class="xl">1<tspan dx="-3">8</tspan>:44:07</text>
<text transform="translate(2553.8,1566.6) rotate(-48)" class="xl">1<tspan dx="-3">8</tspan>:56:08</text>
<text transform="translate(2600.2,1566.6) rotate(-48)" class="xl">1<tspan dx="-3">9</tspan>:08:08</text>
<text transform="translate(2646.6,1566.6) rotate(-48)" class="xl">1<tspan dx="-3">9</tspan>:21<tspan dx="-3">:</tspan>08</text>
<text transform="translate(2693.0,1566.6) rotate(-48)" class="xl">1<tspan dx="-3">9</tspan>:34:07</text>
<text transform="translate(2739.4,1566.6) rotate(-48)" class="xl">1<tspan dx="-3">9</tspan>:46:08</text>
<text transform="translate(2785.8,1566.6) rotate(-48)" class="xl">1<tspan dx="-3">9</tspan>:58:08</text>
</svg>

<div id="scroll" class="abs"></div>
<div id="thumb" class="abs"></div>
</div>
</body></html>
